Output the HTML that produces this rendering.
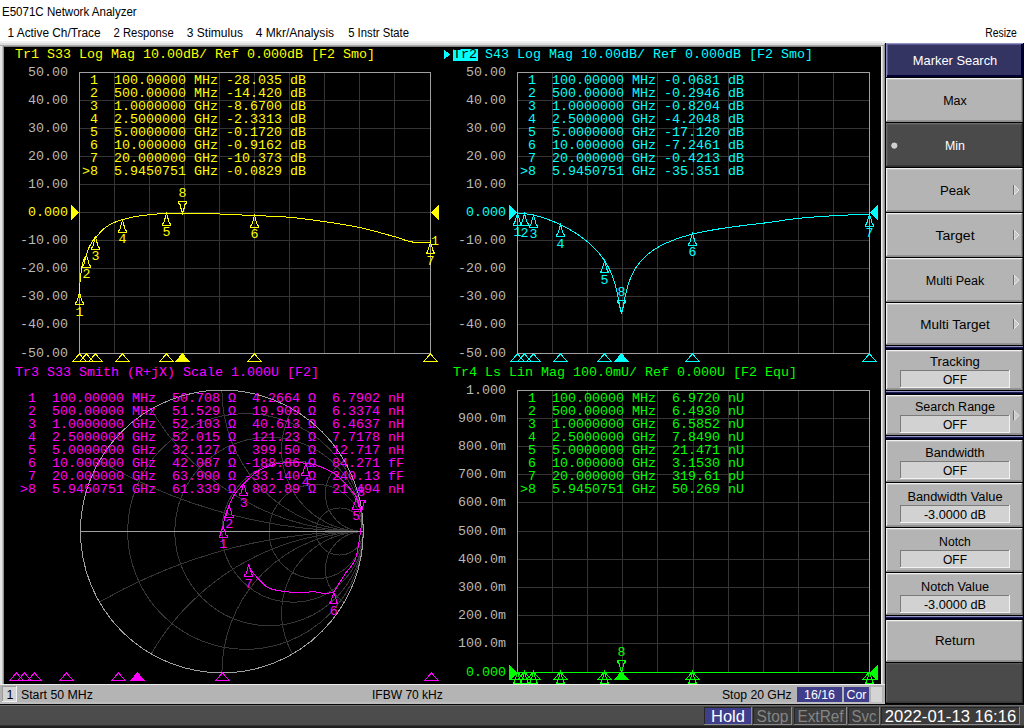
<!DOCTYPE html>
<html><head><meta charset="utf-8"><style>
html,body{margin:0;padding:0;background:#fff;overflow:hidden;}
svg{display:block;}
</style></head><body>
<svg width="1024" height="728" viewBox="0 0 1024 728" shape-rendering="auto">
<rect x="0" y="0" width="1024" height="728" fill="#ffffff" />
<text x="2" y="16" fill="#000" font-size="12" font-family='"Liberation Sans", sans-serif' textLength="134.7" lengthAdjust="spacingAndGlyphs">E5071C Network Analyzer</text>
<text x="7.5" y="37" fill="#000" font-size="12" font-family='"Liberation Sans", sans-serif' textLength="93.1" lengthAdjust="spacingAndGlyphs">1 Active Ch/Trace</text>
<text x="113.6" y="37" fill="#000" font-size="12" font-family='"Liberation Sans", sans-serif' textLength="60.1" lengthAdjust="spacingAndGlyphs">2 Response</text>
<text x="186.8" y="37" fill="#000" font-size="12" font-family='"Liberation Sans", sans-serif' textLength="56.1" lengthAdjust="spacingAndGlyphs">3 Stimulus</text>
<text x="255.8" y="37" fill="#000" font-size="12" font-family='"Liberation Sans", sans-serif' textLength="78.3" lengthAdjust="spacingAndGlyphs">4 Mkr/Analysis</text>
<text x="348.2" y="37" fill="#000" font-size="12" font-family='"Liberation Sans", sans-serif' textLength="60.8" lengthAdjust="spacingAndGlyphs">5 Instr State</text>
<text x="985.2" y="37" fill="#000" font-size="12" font-family='"Liberation Sans", sans-serif' textLength="31.7" lengthAdjust="spacingAndGlyphs">Resize</text>
<rect x="0" y="41" width="886" height="2" fill="#f0f0f0" />
<rect x="0" y="43" width="886" height="2" fill="#dcdcdc" />
<rect x="0" y="45" width="886" height="1" fill="#a8a8a8" />
<rect x="0" y="46" width="886" height="1" fill="#858585" />
<rect x="0" y="46" width="2" height="640" fill="#e4e4e4" />
<rect x="2" y="46" width="1" height="640" fill="#c0c0c0" />
<rect x="3" y="47" width="1" height="638" fill="#909090" />
<rect x="881" y="46" width="1" height="640" fill="#f0f0f0" />
<rect x="882" y="46" width="1" height="640" fill="#d0d0d0" />
<rect x="883" y="46" width="1" height="640" fill="#b0b0b0" />
<rect x="884" y="44" width="1" height="642" fill="#909090" />
<rect x="885" y="43" width="1" height="662" fill="#101010" />
<rect x="4" y="47" width="877" height="637" fill="#000000" />
<defs><clipPath id="cl"><rect x="4" y="47" width="877" height="637"/></clipPath></defs>
<g clip-path="url(#cl)" shape-rendering="crispEdges">
<line x1="114.5" y1="72.5" x2="114.5" y2="353.5" stroke="#343434" stroke-width="1"/>
<line x1="149.5" y1="72.5" x2="149.5" y2="353.5" stroke="#343434" stroke-width="1"/>
<line x1="184.5" y1="72.5" x2="184.5" y2="353.5" stroke="#343434" stroke-width="1"/>
<line x1="219.5" y1="72.5" x2="219.5" y2="353.5" stroke="#343434" stroke-width="1"/>
<line x1="254.5" y1="72.5" x2="254.5" y2="353.5" stroke="#343434" stroke-width="1"/>
<line x1="289.5" y1="72.5" x2="289.5" y2="353.5" stroke="#343434" stroke-width="1"/>
<line x1="324.5" y1="72.5" x2="324.5" y2="353.5" stroke="#343434" stroke-width="1"/>
<line x1="359.5" y1="72.5" x2="359.5" y2="353.5" stroke="#343434" stroke-width="1"/>
<line x1="394.5" y1="72.5" x2="394.5" y2="353.5" stroke="#343434" stroke-width="1"/>
<line x1="79.5" y1="100.5" x2="430.5" y2="100.5" stroke="#343434" stroke-width="1"/>
<line x1="79.5" y1="128.5" x2="430.5" y2="128.5" stroke="#343434" stroke-width="1"/>
<line x1="79.5" y1="156.5" x2="430.5" y2="156.5" stroke="#343434" stroke-width="1"/>
<line x1="79.5" y1="184.5" x2="430.5" y2="184.5" stroke="#343434" stroke-width="1"/>
<line x1="79.5" y1="212.5" x2="430.5" y2="212.5" stroke="#343434" stroke-width="1"/>
<line x1="79.5" y1="240.5" x2="430.5" y2="240.5" stroke="#343434" stroke-width="1"/>
<line x1="79.5" y1="268.5" x2="430.5" y2="268.5" stroke="#343434" stroke-width="1"/>
<line x1="79.5" y1="296.5" x2="430.5" y2="296.5" stroke="#343434" stroke-width="1"/>
<line x1="79.5" y1="324.5" x2="430.5" y2="324.5" stroke="#343434" stroke-width="1"/>
<rect x="79.5" y="72.5" width="351" height="281" fill="none" stroke="#a0a0a0" stroke-width="1"/>
<text x="15" y="58" fill="#ffff00" font-size="13.33" font-family='"Liberation Mono", monospace' text-anchor="start"  xml:space="preserve">Tr1 S33 Log Mag 10.00dB/ Ref 0.000dB [F2 Smo]</text>
<text x="68" y="76.0" fill="#b8b8b8" font-size="13.33" font-family='"Liberation Mono", monospace' text-anchor="end"  xml:space="preserve">50.00</text>
<text x="68" y="104.0" fill="#b8b8b8" font-size="13.33" font-family='"Liberation Mono", monospace' text-anchor="end"  xml:space="preserve">40.00</text>
<text x="68" y="132.0" fill="#b8b8b8" font-size="13.33" font-family='"Liberation Mono", monospace' text-anchor="end"  xml:space="preserve">30.00</text>
<text x="68" y="160.0" fill="#b8b8b8" font-size="13.33" font-family='"Liberation Mono", monospace' text-anchor="end"  xml:space="preserve">20.00</text>
<text x="68" y="188.0" fill="#b8b8b8" font-size="13.33" font-family='"Liberation Mono", monospace' text-anchor="end"  xml:space="preserve">10.00</text>
<text x="68" y="216.0" fill="#ffff00" font-size="13.33" font-family='"Liberation Mono", monospace' text-anchor="end"  xml:space="preserve">0.000</text>
<text x="68" y="244.0" fill="#b8b8b8" font-size="13.33" font-family='"Liberation Mono", monospace' text-anchor="end"  xml:space="preserve">-10.00</text>
<text x="68" y="272.0" fill="#b8b8b8" font-size="13.33" font-family='"Liberation Mono", monospace' text-anchor="end"  xml:space="preserve">-20.00</text>
<text x="68" y="300.0" fill="#b8b8b8" font-size="13.33" font-family='"Liberation Mono", monospace' text-anchor="end"  xml:space="preserve">-30.00</text>
<text x="68" y="328.0" fill="#b8b8b8" font-size="13.33" font-family='"Liberation Mono", monospace' text-anchor="end"  xml:space="preserve">-40.00</text>
<text x="68" y="357.0" fill="#b8b8b8" font-size="13.33" font-family='"Liberation Mono", monospace' text-anchor="end"  xml:space="preserve">-50.00</text>
<text x="82" y="84" fill="#ffff00" font-size="13.33" font-family='"Liberation Mono", monospace' text-anchor="start"  xml:space="preserve"> 1  100.00000 MHz -28.035 dB</text>
<text x="82" y="97" fill="#ffff00" font-size="13.33" font-family='"Liberation Mono", monospace' text-anchor="start"  xml:space="preserve"> 2  500.00000 MHz -14.420 dB</text>
<text x="82" y="110" fill="#ffff00" font-size="13.33" font-family='"Liberation Mono", monospace' text-anchor="start"  xml:space="preserve"> 3  1.0000000 GHz -8.6700 dB</text>
<text x="82" y="123" fill="#ffff00" font-size="13.33" font-family='"Liberation Mono", monospace' text-anchor="start"  xml:space="preserve"> 4  2.5000000 GHz -2.3313 dB</text>
<text x="82" y="136" fill="#ffff00" font-size="13.33" font-family='"Liberation Mono", monospace' text-anchor="start"  xml:space="preserve"> 5  5.0000000 GHz -0.1720 dB</text>
<text x="82" y="149" fill="#ffff00" font-size="13.33" font-family='"Liberation Mono", monospace' text-anchor="start"  xml:space="preserve"> 6  10.000000 GHz -0.9162 dB</text>
<text x="82" y="162" fill="#ffff00" font-size="13.33" font-family='"Liberation Mono", monospace' text-anchor="start"  xml:space="preserve"> 7  20.000000 GHz -10.373 dB</text>
<text x="82" y="175" fill="#ffff00" font-size="13.33" font-family='"Liberation Mono", monospace' text-anchor="start"  xml:space="preserve">&gt;8  5.9450751 GHz -0.0829 dB</text>
<path d="M79.50 293.00 L79.50 292.82 L79.51 292.62 L79.51 292.40 L79.51 292.12 L79.52 291.77 L79.54 291.31 L79.56 290.73 L79.60 290.00 L79.65 289.08 L79.70 287.99 L79.76 286.76 L79.83 285.44 L79.91 284.06 L80.00 282.66 L80.09 281.30 L80.20 280.00 L80.32 278.74 L80.44 277.46 L80.58 276.18 L80.73 274.91 L80.88 273.64 L81.04 272.39 L81.22 271.18 L81.40 270.00 L81.59 268.85 L81.78 267.73 L81.97 266.62 L82.17 265.54 L82.40 264.49 L82.64 263.46 L82.90 262.47 L83.20 261.50 L83.54 260.58 L83.92 259.71 L84.32 258.88 L84.75 258.08 L85.18 257.28 L85.61 256.48 L86.02 255.65 L86.40 254.80 L86.75 253.91 L87.07 252.99 L87.38 252.05 L87.68 251.11 L87.99 250.17 L88.30 249.25 L88.64 248.35 L89.00 247.50 L89.40 246.68 L89.83 245.89 L90.27 245.11 L90.73 244.36 L91.19 243.62 L91.65 242.90 L92.09 242.19 L92.50 241.50 L92.91 240.79 L93.32 240.04 L93.72 239.29 L94.12 238.57 L94.49 237.90 L94.84 237.31 L95.14 236.84 L95.40 236.50 L95.61 236.33 L95.77 236.32 L95.89 236.43 L95.99 236.62 L96.06 236.84 L96.12 237.07 L96.17 237.26 L96.21 237.36 L96.61 236.84 L97.05 236.27 L97.49 235.70 L97.93 235.15 L98.37 234.61 L98.80 234.08 L99.24 233.55 L99.68 233.04 L100.12 232.55 L100.56 232.06 L101.00 231.59 L101.44 231.13 L101.88 230.68 L102.31 230.24 L102.75 229.82 L103.19 229.42 L103.63 229.02 L104.07 228.65 L104.51 228.29 L104.95 227.94 L105.39 227.61 L105.83 227.29 L106.26 226.97 L106.70 226.67 L107.14 226.37 L107.58 226.08 L108.02 225.79 L108.46 225.52 L108.90 225.25 L109.33 224.99 L109.77 224.73 L110.21 224.49 L110.65 224.25 L111.09 224.01 L111.53 223.78 L111.97 223.56 L112.41 223.35 L112.84 223.14 L113.28 222.93 L113.72 222.73 L114.16 222.54 L114.60 222.35 L115.04 222.16 L115.48 221.98 L115.92 221.80 L116.35 221.63 L116.79 221.46 L117.23 221.29 L117.67 221.13 L118.11 220.97 L118.55 220.81 L118.99 220.66 L119.43 220.51 L119.87 220.37 L120.30 220.23 L120.74 220.09 L121.18 219.96 L121.62 219.83 L122.06 219.70 L122.50 219.58 L122.94 219.46 L123.38 219.34 L123.81 219.22 L124.25 219.11 L124.69 218.99 L125.13 218.87 L125.57 218.76 L126.01 218.65 L126.45 218.53 L126.89 218.42 L127.32 218.31 L127.76 218.21 L128.20 218.10 L128.64 217.99 L129.08 217.89 L129.52 217.78 L129.96 217.68 L130.39 217.58 L130.83 217.48 L131.27 217.39 L131.71 217.29 L132.15 217.20 L132.59 217.11 L133.03 217.02 L133.47 216.93 L133.91 216.84 L134.34 216.75 L134.78 216.67 L135.22 216.59 L135.66 216.51 L136.10 216.43 L136.54 216.36 L136.98 216.28 L137.41 216.21 L137.85 216.14 L138.29 216.08 L138.73 216.01 L139.17 215.95 L139.61 215.89 L140.05 215.83 L140.49 215.77 L140.93 215.72 L141.36 215.66 L141.80 215.61 L142.24 215.55 L142.68 215.50 L143.12 215.44 L143.56 215.39 L144.00 215.33 L144.44 215.28 L144.87 215.23 L145.31 215.18 L145.75 215.12 L146.19 215.07 L146.63 215.02 L147.07 214.97 L147.51 214.92 L147.94 214.87 L148.38 214.82 L148.82 214.77 L149.26 214.72 L149.70 214.68 L150.14 214.63 L150.58 214.58 L151.02 214.54 L151.45 214.49 L151.89 214.45 L152.33 214.41 L152.77 214.36 L153.21 214.32 L153.65 214.28 L154.09 214.24 L154.53 214.20 L154.97 214.16 L155.40 214.12 L155.84 214.09 L156.28 214.05 L156.72 214.01 L157.16 213.98 L157.60 213.95 L158.04 213.91 L158.47 213.88 L158.91 213.85 L159.35 213.82 L159.79 213.79 L160.23 213.76 L160.67 213.74 L161.11 213.71 L161.55 213.69 L161.99 213.66 L162.42 213.64 L162.86 213.62 L163.30 213.60 L163.74 213.58 L164.18 213.56 L164.62 213.54 L165.06 213.53 L165.50 213.51 L165.93 213.50 L166.37 213.49 L166.81 213.48 L167.25 213.47 L167.69 213.46 L168.13 213.45 L168.57 213.44 L169.00 213.43 L169.44 213.42 L169.88 213.41 L170.32 213.40 L170.76 213.39 L171.20 213.38 L171.64 213.37 L172.08 213.36 L172.51 213.35 L172.95 213.34 L173.39 213.33 L173.83 213.33 L174.27 213.32 L174.71 213.31 L175.15 213.30 L175.59 213.30 L176.02 213.29 L176.46 213.28 L176.90 213.28 L177.34 213.27 L177.78 213.27 L178.22 213.26 L178.66 213.26 L179.10 213.25 L179.53 213.25 L179.97 213.25 L180.41 213.24 L180.85 213.24 L181.29 213.24 L181.73 213.24 L182.17 213.23 L182.61 213.23 L183.04 213.23 L183.48 213.23 L183.92 213.23 L184.36 213.23 L184.80 213.24 L185.24 213.24 L185.68 213.24 L186.12 213.24 L186.56 213.24 L186.99 213.25 L187.43 213.25 L187.87 213.25 L188.31 213.26 L188.75 213.26 L189.19 213.27 L189.63 213.27 L190.06 213.28 L190.50 213.28 L190.94 213.29 L191.38 213.29 L191.82 213.30 L192.26 213.31 L192.70 213.31 L193.14 213.32 L193.57 213.33 L194.01 213.33 L194.45 213.34 L194.89 213.35 L195.33 213.36 L195.77 213.36 L196.21 213.37 L196.65 213.38 L197.08 213.39 L197.52 213.40 L197.96 213.41 L198.40 213.42 L198.84 213.43 L199.28 213.44 L199.72 213.45 L200.16 213.46 L200.59 213.47 L201.03 213.48 L201.47 213.49 L201.91 213.50 L202.35 213.51 L202.79 213.52 L203.23 213.53 L203.67 213.54 L204.10 213.55 L204.54 213.56 L204.98 213.57 L205.42 213.58 L205.86 213.59 L206.30 213.60 L206.74 213.61 L207.18 213.62 L207.62 213.63 L208.05 213.64 L208.49 213.65 L208.93 213.66 L209.37 213.67 L209.81 213.68 L210.25 213.69 L210.69 213.71 L211.12 213.72 L211.56 213.73 L212.00 213.74 L212.44 213.75 L212.88 213.76 L213.32 213.77 L213.76 213.79 L214.20 213.80 L214.63 213.81 L215.07 213.83 L215.51 213.84 L215.95 213.85 L216.39 213.87 L216.83 213.88 L217.27 213.90 L217.71 213.91 L218.14 213.93 L218.58 213.94 L219.02 213.96 L219.46 213.98 L219.90 213.99 L220.34 214.01 L220.78 214.02 L221.22 214.04 L221.66 214.06 L222.09 214.08 L222.53 214.09 L222.97 214.11 L223.41 214.13 L223.85 214.15 L224.29 214.17 L224.73 214.18 L225.16 214.20 L225.60 214.22 L226.04 214.24 L226.48 214.26 L226.92 214.28 L227.36 214.30 L227.80 214.32 L228.24 214.34 L228.67 214.36 L229.11 214.38 L229.55 214.40 L229.99 214.42 L230.43 214.44 L230.87 214.46 L231.31 214.48 L231.75 214.50 L232.18 214.52 L232.62 214.54 L233.06 214.56 L233.50 214.58 L233.94 214.61 L234.38 214.63 L234.82 214.65 L235.26 214.67 L235.69 214.69 L236.13 214.71 L236.57 214.73 L237.01 214.75 L237.45 214.78 L237.89 214.80 L238.33 214.82 L238.77 214.84 L239.20 214.86 L239.64 214.88 L240.08 214.90 L240.52 214.93 L240.96 214.95 L241.40 214.97 L241.84 214.99 L242.28 215.01 L242.72 215.03 L243.15 215.05 L243.59 215.07 L244.03 215.10 L244.47 215.12 L244.91 215.14 L245.35 215.16 L245.79 215.18 L246.22 215.20 L246.66 215.22 L247.10 215.24 L247.54 215.26 L247.98 215.28 L248.42 215.30 L248.86 215.32 L249.30 215.34 L249.73 215.36 L250.17 215.38 L250.61 215.40 L251.05 215.42 L251.49 215.44 L251.93 215.46 L252.37 215.48 L252.81 215.50 L253.25 215.52 L253.68 215.54 L254.12 215.56 L254.56 215.57 L255.00 215.59 L255.44 215.61 L255.88 215.63 L256.32 215.65 L256.75 215.66 L257.19 215.68 L257.63 215.70 L258.07 215.71 L258.51 215.73 L258.95 215.75 L259.39 215.76 L259.83 215.78 L260.26 215.79 L260.70 215.81 L261.14 215.83 L261.58 215.84 L262.02 215.86 L262.46 215.87 L262.90 215.89 L263.34 215.90 L263.77 215.92 L264.21 215.93 L264.65 215.95 L265.09 215.96 L265.53 215.98 L265.97 216.00 L266.41 216.01 L266.85 216.03 L267.29 216.04 L267.72 216.06 L268.16 216.07 L268.60 216.09 L269.04 216.11 L269.48 216.12 L269.92 216.14 L270.36 216.16 L270.80 216.17 L271.23 216.19 L271.67 216.21 L272.11 216.23 L272.55 216.24 L272.99 216.26 L273.43 216.28 L273.87 216.30 L274.30 216.32 L274.74 216.34 L275.18 216.36 L275.62 216.38 L276.06 216.40 L276.50 216.42 L276.94 216.44 L277.38 216.46 L277.81 216.48 L278.25 216.51 L278.69 216.53 L279.13 216.55 L279.57 216.58 L280.01 216.60 L280.45 216.62 L280.89 216.65 L281.32 216.67 L281.76 216.70 L282.20 216.73 L282.64 216.76 L283.08 216.79 L283.52 216.82 L283.96 216.85 L284.40 216.88 L284.83 216.91 L285.27 216.94 L285.71 216.97 L286.15 217.01 L286.59 217.04 L287.03 217.08 L287.47 217.11 L287.91 217.15 L288.35 217.19 L288.78 217.23 L289.22 217.27 L289.66 217.30 L290.10 217.34 L290.54 217.38 L290.98 217.43 L291.42 217.47 L291.86 217.51 L292.29 217.55 L292.73 217.60 L293.17 217.64 L293.61 217.68 L294.05 217.73 L294.49 217.78 L294.93 217.82 L295.37 217.87 L295.80 217.92 L296.24 217.96 L296.68 218.01 L297.12 218.06 L297.56 218.11 L298.00 218.16 L298.44 218.21 L298.88 218.26 L299.31 218.31 L299.75 218.36 L300.19 218.41 L300.63 218.46 L301.07 218.52 L301.51 218.57 L301.95 218.62 L302.38 218.68 L302.82 218.73 L303.26 218.79 L303.70 218.84 L304.14 218.89 L304.58 218.95 L305.02 219.01 L305.46 219.06 L305.89 219.12 L306.33 219.17 L306.77 219.23 L307.21 219.29 L307.65 219.35 L308.09 219.40 L308.53 219.46 L308.97 219.52 L309.40 219.58 L309.84 219.64 L310.28 219.69 L310.72 219.75 L311.16 219.81 L311.60 219.87 L312.04 219.93 L312.48 219.99 L312.91 220.05 L313.35 220.11 L313.79 220.17 L314.23 220.23 L314.67 220.29 L315.11 220.35 L315.55 220.41 L315.99 220.47 L316.42 220.53 L316.86 220.59 L317.30 220.65 L317.74 220.71 L318.18 220.78 L318.62 220.84 L319.06 220.90 L319.50 220.96 L319.93 221.02 L320.37 221.08 L320.81 221.14 L321.25 221.20 L321.69 221.26 L322.13 221.32 L322.57 221.38 L323.01 221.44 L323.44 221.51 L323.88 221.57 L324.32 221.63 L324.76 221.69 L325.20 221.75 L325.64 221.81 L326.08 221.87 L326.52 221.93 L326.95 221.99 L327.39 222.05 L327.83 222.11 L328.27 222.18 L328.71 222.24 L329.15 222.30 L329.59 222.36 L330.03 222.43 L330.46 222.49 L330.90 222.56 L331.34 222.62 L331.78 222.68 L332.22 222.75 L332.66 222.81 L333.10 222.88 L333.54 222.95 L333.98 223.01 L334.41 223.08 L334.85 223.14 L335.29 223.21 L335.73 223.28 L336.17 223.35 L336.61 223.41 L337.05 223.48 L337.48 223.55 L337.92 223.62 L338.36 223.69 L338.80 223.76 L339.24 223.83 L339.68 223.90 L340.12 223.97 L340.56 224.04 L341.00 224.11 L341.43 224.18 L341.87 224.26 L342.31 224.33 L342.75 224.40 L343.19 224.47 L343.63 224.55 L344.07 224.62 L344.50 224.70 L344.94 224.77 L345.38 224.85 L345.82 224.92 L346.26 225.00 L346.70 225.07 L347.14 225.15 L347.58 225.23 L348.01 225.30 L348.45 225.38 L348.89 225.46 L349.33 225.54 L349.77 225.62 L350.21 225.70 L350.65 225.78 L351.09 225.86 L351.52 225.94 L351.96 226.02 L352.40 226.10 L352.84 226.18 L353.28 226.27 L353.72 226.35 L354.16 226.43 L354.60 226.52 L355.03 226.60 L355.47 226.69 L355.91 226.77 L356.35 226.86 L356.79 226.94 L357.23 227.03 L357.67 227.12 L358.11 227.20 L358.54 227.29 L358.98 227.38 L359.42 227.47 L359.86 227.56 L360.30 227.65 L360.74 227.74 L361.18 227.83 L361.62 227.92 L362.05 228.02 L362.49 228.12 L362.93 228.21 L363.37 228.31 L363.81 228.41 L364.25 228.51 L364.69 228.61 L365.13 228.71 L365.56 228.82 L366.00 228.92 L366.44 229.02 L366.88 229.13 L367.32 229.24 L367.76 229.34 L368.20 229.45 L368.64 229.56 L369.07 229.67 L369.51 229.78 L369.95 229.89 L370.39 230.01 L370.83 230.12 L371.27 230.23 L371.71 230.35 L372.15 230.46 L372.58 230.58 L373.02 230.70 L373.46 230.81 L373.90 230.93 L374.34 231.05 L374.78 231.17 L375.22 231.29 L375.66 231.40 L376.09 231.52 L376.53 231.65 L376.97 231.77 L377.41 231.89 L377.85 232.01 L378.29 232.13 L378.73 232.25 L379.17 232.37 L379.61 232.50 L380.04 232.62 L380.48 232.74 L380.92 232.87 L381.36 232.99 L381.80 233.11 L382.24 233.24 L382.68 233.36 L383.12 233.49 L383.55 233.61 L383.99 233.73 L384.43 233.86 L384.87 233.98 L385.31 234.11 L385.75 234.23 L386.19 234.36 L386.62 234.48 L387.06 234.60 L387.50 234.73 L387.94 234.85 L388.38 234.97 L388.82 235.10 L389.26 235.22 L389.70 235.34 L390.13 235.47 L390.57 235.59 L391.01 235.71 L391.45 235.83 L391.89 235.95 L392.33 236.07 L392.77 236.19 L393.21 236.32 L393.64 236.43 L394.08 236.55 L394.52 236.67 L394.96 236.79 L395.40 236.91 L395.84 237.03 L396.28 237.16 L396.72 237.29 L397.15 237.42 L397.59 237.56 L398.03 237.71 L398.47 237.85 L398.91 238.00 L399.35 238.15 L399.79 238.31 L400.23 238.46 L400.67 238.62 L401.10 238.78 L401.54 238.93 L401.98 239.09 L402.42 239.25 L402.86 239.41 L403.30 239.57 L403.74 239.72 L404.18 239.88 L404.61 240.03 L405.05 240.18 L405.49 240.33 L405.93 240.47 L406.37 240.61 L406.81 240.75 L407.25 240.88 L407.69 241.01 L408.12 241.13 L408.56 241.25 L409.00 241.36 L409.44 241.47 L409.88 241.57 L410.32 241.66 L410.76 241.75 L411.19 241.83 L411.63 241.90 L412.07 241.96 L412.51 242.01 L412.95 242.06 L413.39 242.09 L413.83 242.12 L414.27 242.13 L414.70 242.14 L415.14 242.14 L415.58 242.14 L416.02 242.14 L416.46 242.14 L416.90 242.14 L417.34 242.14 L417.78 242.14 L418.21 242.14 L418.65 242.14 L419.09 242.14 L419.53 242.14 L419.97 242.14 L420.41 242.14 L420.85 242.14 L421.29 242.15 L421.72 242.15 L422.16 242.15 L422.60 242.15 L423.04 242.15 L423.48 242.15 L423.92 242.15 L424.36 242.15 L424.80 242.15 L425.24 242.15 L425.67 242.15 L426.11 242.15 L426.55 242.15 L426.99 242.15 L427.43 242.15 L427.87 242.15 L428.31 242.15 L428.75 242.15 L429.18 242.15 L429.62 242.15 L430.06 242.15 L430.50 242.15" fill="none" stroke="#ffff00" stroke-width="1.0" stroke-linejoin="round" shape-rendering="crispEdges"/>
<path d="M79.5 292.8 L76.5 302.8 L75.5 302.8 L75.5 304.6 L83.5 304.6 L83.5 302.8 L82.5 302.8 Z" fill="none" stroke="#ffff00" stroke-width="1" stroke-linejoin="miter" shape-rendering="crispEdges"/>
<text x="79.5" y="315.6" fill="#ffff00" font-size="13.33" font-family='"Liberation Mono", monospace' text-anchor="middle"  xml:space="preserve">1</text>
<path d="M86.5 255.3 L83.5 265.3 L82.5 265.3 L82.5 267.1 L90.5 267.1 L90.5 265.3 L89.5 265.3 Z" fill="none" stroke="#ffff00" stroke-width="1" stroke-linejoin="miter" shape-rendering="crispEdges"/>
<text x="86.5" y="278.1" fill="#ffff00" font-size="13.33" font-family='"Liberation Mono", monospace' text-anchor="middle"  xml:space="preserve">2</text>
<path d="M95.5 237.4 L92.5 247.4 L91.5 247.4 L91.5 249.2 L99.5 249.2 L99.5 247.4 L98.5 247.4 Z" fill="none" stroke="#ffff00" stroke-width="1" stroke-linejoin="miter" shape-rendering="crispEdges"/>
<text x="95.5" y="260.1627" fill="#ffff00" font-size="13.33" font-family='"Liberation Mono", monospace' text-anchor="middle"  xml:space="preserve">3</text>
<path d="M122.5 220.4 L119.5 230.4 L118.5 230.4 L118.5 232.2 L126.5 232.2 L126.5 230.4 L125.5 230.4 Z" fill="none" stroke="#ffff00" stroke-width="1" stroke-linejoin="miter" shape-rendering="crispEdges"/>
<text x="122.5" y="243.20000000000002" fill="#ffff00" font-size="13.33" font-family='"Liberation Mono", monospace' text-anchor="middle"  xml:space="preserve">4</text>
<path d="M166.5 213.5 L163.5 223.5 L162.5 223.5 L162.5 225.3 L170.5 225.3 L170.5 223.5 L169.5 223.5 Z" fill="none" stroke="#ffff00" stroke-width="1" stroke-linejoin="miter" shape-rendering="crispEdges"/>
<text x="166.5" y="236.28332" fill="#ffff00" font-size="13.33" font-family='"Liberation Mono", monospace' text-anchor="middle"  xml:space="preserve">5</text>
<path d="M254.5 215.6 L251.5 225.6 L250.5 225.6 L250.5 227.4 L258.5 227.4 L258.5 225.6 L257.5 225.6 Z" fill="none" stroke="#ffff00" stroke-width="1" stroke-linejoin="miter" shape-rendering="crispEdges"/>
<text x="254.5" y="238.374522" fill="#ffff00" font-size="13.33" font-family='"Liberation Mono", monospace' text-anchor="middle"  xml:space="preserve">6</text>
<path d="M430.5 242.1 L427.5 252.1 L426.5 252.1 L426.5 253.9 L434.5 253.9 L434.5 252.1 L433.5 252.1 Z" fill="none" stroke="#ffff00" stroke-width="1" stroke-linejoin="miter" shape-rendering="crispEdges"/>
<text x="430.5" y="264.94813" fill="#ffff00" font-size="13.33" font-family='"Liberation Mono", monospace' text-anchor="middle"  xml:space="preserve">7</text>
<path d="M182.5 213.2 L179.5 203.2 L178.5 203.2 L178.5 201.4 L186.5 201.4 L186.5 203.2 L185.5 203.2 Z" fill="none" stroke="#ffff00" stroke-width="1.2" shape-rendering="crispEdges"/>
<text x="182.5" y="197.232949" fill="#ffff00" font-size="13.33" font-family='"Liberation Mono", monospace' text-anchor="middle"  xml:space="preserve">8</text>
<path d="M79.5 354.0 L72.5 361.5 L86.5 361.5 Z" fill="none" stroke="#ffff00" stroke-width="1" shape-rendering="crispEdges"/>
<path d="M86.5 354.0 L79.5 361.5 L93.5 361.5 Z" fill="none" stroke="#ffff00" stroke-width="1" shape-rendering="crispEdges"/>
<path d="M95.5 354.0 L88.5 361.5 L102.5 361.5 Z" fill="none" stroke="#ffff00" stroke-width="1" shape-rendering="crispEdges"/>
<path d="M122.5 354.0 L115.5 361.5 L129.5 361.5 Z" fill="none" stroke="#ffff00" stroke-width="1" shape-rendering="crispEdges"/>
<path d="M166.5 354.0 L159.5 361.5 L173.5 361.5 Z" fill="none" stroke="#ffff00" stroke-width="1" shape-rendering="crispEdges"/>
<path d="M254.5 354.0 L247.5 361.5 L261.5 361.5 Z" fill="none" stroke="#ffff00" stroke-width="1" shape-rendering="crispEdges"/>
<path d="M430.5 354.0 L423.5 361.5 L437.5 361.5 Z" fill="none" stroke="#ffff00" stroke-width="1" shape-rendering="crispEdges"/>
<path d="M182.5 354.0 L175.5 361.5 L189.5 361.5 Z" fill="#ffff00" stroke="#ffff00" stroke-width="1" shape-rendering="crispEdges"/>
<path d="M79 212.5 L71 205.0 L71 220.0 Z" fill="#ffff00"/>
<path d="M431 212.5 L439 205.0 L439 220.0 Z" fill="#ffff00"/>
<text x="431" y="245" fill="#ffff00" font-size="13.33" font-family='"Liberation Mono", monospace' text-anchor="start"  xml:space="preserve">1</text>
<line x1="552.5" y1="72.5" x2="552.5" y2="353.5" stroke="#343434" stroke-width="1"/>
<line x1="587.5" y1="72.5" x2="587.5" y2="353.5" stroke="#343434" stroke-width="1"/>
<line x1="622.5" y1="72.5" x2="622.5" y2="353.5" stroke="#343434" stroke-width="1"/>
<line x1="657.5" y1="72.5" x2="657.5" y2="353.5" stroke="#343434" stroke-width="1"/>
<line x1="693.5" y1="72.5" x2="693.5" y2="353.5" stroke="#343434" stroke-width="1"/>
<line x1="728.5" y1="72.5" x2="728.5" y2="353.5" stroke="#343434" stroke-width="1"/>
<line x1="763.5" y1="72.5" x2="763.5" y2="353.5" stroke="#343434" stroke-width="1"/>
<line x1="798.5" y1="72.5" x2="798.5" y2="353.5" stroke="#343434" stroke-width="1"/>
<line x1="833.5" y1="72.5" x2="833.5" y2="353.5" stroke="#343434" stroke-width="1"/>
<line x1="517.5" y1="100.5" x2="869.5" y2="100.5" stroke="#343434" stroke-width="1"/>
<line x1="517.5" y1="128.5" x2="869.5" y2="128.5" stroke="#343434" stroke-width="1"/>
<line x1="517.5" y1="156.5" x2="869.5" y2="156.5" stroke="#343434" stroke-width="1"/>
<line x1="517.5" y1="184.5" x2="869.5" y2="184.5" stroke="#343434" stroke-width="1"/>
<line x1="517.5" y1="212.5" x2="869.5" y2="212.5" stroke="#343434" stroke-width="1"/>
<line x1="517.5" y1="240.5" x2="869.5" y2="240.5" stroke="#343434" stroke-width="1"/>
<line x1="517.5" y1="268.5" x2="869.5" y2="268.5" stroke="#343434" stroke-width="1"/>
<line x1="517.5" y1="296.5" x2="869.5" y2="296.5" stroke="#343434" stroke-width="1"/>
<line x1="517.5" y1="324.5" x2="869.5" y2="324.5" stroke="#343434" stroke-width="1"/>
<rect x="517.5" y="72.5" width="352" height="281" fill="none" stroke="#a0a0a0" stroke-width="1"/>
<path d="M444 49.5 L450 54.5 L444 59.5 Z" fill="#00ffff"/>
<rect x="453" y="49" width="25" height="12" fill="#00ffff" />
<text x="453" y="58" fill="#000" font-size="13.33" font-family='"Liberation Mono", monospace' text-anchor="start"  xml:space="preserve">Tr2</text>
<text x="485" y="58" fill="#00ffff" font-size="13.33" font-family='"Liberation Mono", monospace' text-anchor="start"  xml:space="preserve">S43 Log Mag 10.00dB/ Ref 0.000dB [F2 Smo]</text>
<text x="506" y="76.0" fill="#b8b8b8" font-size="13.33" font-family='"Liberation Mono", monospace' text-anchor="end"  xml:space="preserve">50.00</text>
<text x="506" y="104.0" fill="#b8b8b8" font-size="13.33" font-family='"Liberation Mono", monospace' text-anchor="end"  xml:space="preserve">40.00</text>
<text x="506" y="132.0" fill="#b8b8b8" font-size="13.33" font-family='"Liberation Mono", monospace' text-anchor="end"  xml:space="preserve">30.00</text>
<text x="506" y="160.0" fill="#b8b8b8" font-size="13.33" font-family='"Liberation Mono", monospace' text-anchor="end"  xml:space="preserve">20.00</text>
<text x="506" y="188.0" fill="#b8b8b8" font-size="13.33" font-family='"Liberation Mono", monospace' text-anchor="end"  xml:space="preserve">10.00</text>
<text x="506" y="216.0" fill="#00ffff" font-size="13.33" font-family='"Liberation Mono", monospace' text-anchor="end"  xml:space="preserve">0.000</text>
<text x="506" y="244.0" fill="#b8b8b8" font-size="13.33" font-family='"Liberation Mono", monospace' text-anchor="end"  xml:space="preserve">-10.00</text>
<text x="506" y="272.0" fill="#b8b8b8" font-size="13.33" font-family='"Liberation Mono", monospace' text-anchor="end"  xml:space="preserve">-20.00</text>
<text x="506" y="300.0" fill="#b8b8b8" font-size="13.33" font-family='"Liberation Mono", monospace' text-anchor="end"  xml:space="preserve">-30.00</text>
<text x="506" y="328.0" fill="#b8b8b8" font-size="13.33" font-family='"Liberation Mono", monospace' text-anchor="end"  xml:space="preserve">-40.00</text>
<text x="506" y="357.0" fill="#b8b8b8" font-size="13.33" font-family='"Liberation Mono", monospace' text-anchor="end"  xml:space="preserve">-50.00</text>
<text x="520" y="84" fill="#00ffff" font-size="13.33" font-family='"Liberation Mono", monospace' text-anchor="start"  xml:space="preserve"> 1  100.00000 MHz -0.0681 dB</text>
<text x="520" y="97" fill="#00ffff" font-size="13.33" font-family='"Liberation Mono", monospace' text-anchor="start"  xml:space="preserve"> 2  500.00000 MHz -0.2946 dB</text>
<text x="520" y="110" fill="#00ffff" font-size="13.33" font-family='"Liberation Mono", monospace' text-anchor="start"  xml:space="preserve"> 3  1.0000000 GHz -0.8204 dB</text>
<text x="520" y="123" fill="#00ffff" font-size="13.33" font-family='"Liberation Mono", monospace' text-anchor="start"  xml:space="preserve"> 4  2.5000000 GHz -4.2048 dB</text>
<text x="520" y="136" fill="#00ffff" font-size="13.33" font-family='"Liberation Mono", monospace' text-anchor="start"  xml:space="preserve"> 5  5.0000000 GHz -17.120 dB</text>
<text x="520" y="149" fill="#00ffff" font-size="13.33" font-family='"Liberation Mono", monospace' text-anchor="start"  xml:space="preserve"> 6  10.000000 GHz -7.2461 dB</text>
<text x="520" y="162" fill="#00ffff" font-size="13.33" font-family='"Liberation Mono", monospace' text-anchor="start"  xml:space="preserve"> 7  20.000000 GHz -0.4213 dB</text>
<text x="520" y="175" fill="#00ffff" font-size="13.33" font-family='"Liberation Mono", monospace' text-anchor="start"  xml:space="preserve">&gt;8  5.9450751 GHz -35.351 dB</text>
<path d="M517.50 213.06 L517.79 213.10 L518.09 213.14 L518.38 213.19 L518.67 213.24 L518.97 213.28 L519.26 213.32 L519.55 213.36 L519.85 213.40 L520.14 213.43 L520.43 213.45 L520.73 213.48 L521.02 213.50 L521.31 213.52 L521.61 213.54 L521.90 213.56 L522.19 213.57 L522.49 213.59 L522.78 213.61 L523.07 213.62 L523.37 213.64 L523.66 213.66 L523.95 213.68 L524.25 213.70 L524.54 213.73 L524.83 213.76 L525.13 213.79 L525.42 213.82 L525.71 213.86 L526.01 213.90 L526.30 213.94 L526.59 213.98 L526.89 214.02 L527.18 214.06 L527.47 214.10 L527.77 214.14 L528.06 214.18 L528.35 214.23 L528.65 214.27 L528.94 214.31 L529.23 214.36 L529.53 214.41 L529.82 214.45 L530.11 214.50 L530.41 214.55 L530.70 214.60 L530.99 214.65 L531.29 214.70 L531.58 214.75 L531.87 214.81 L532.17 214.86 L532.46 214.92 L532.75 214.98 L533.05 215.04 L533.34 215.10 L533.63 215.17 L533.93 215.23 L534.22 215.30 L534.51 215.37 L534.81 215.44 L535.10 215.51 L535.39 215.58 L535.69 215.65 L535.98 215.73 L536.27 215.80 L536.57 215.88 L536.86 215.95 L537.15 216.03 L537.45 216.11 L537.74 216.18 L538.03 216.26 L538.33 216.34 L538.62 216.42 L538.91 216.50 L539.21 216.59 L539.50 216.67 L539.79 216.75 L540.09 216.84 L540.38 216.92 L540.67 217.01 L540.97 217.10 L541.26 217.19 L541.55 217.27 L541.85 217.36 L542.14 217.45 L542.43 217.54 L542.73 217.64 L543.02 217.73 L543.31 217.82 L543.61 217.92 L543.90 218.01 L544.19 218.11 L544.49 218.20 L544.78 218.30 L545.07 218.40 L545.37 218.50 L545.66 218.60 L545.95 218.70 L546.25 218.80 L546.54 218.90 L546.83 219.01 L547.13 219.11 L547.42 219.21 L547.71 219.32 L548.01 219.43 L548.30 219.53 L548.59 219.64 L548.89 219.75 L549.18 219.86 L549.47 219.97 L549.77 220.08 L550.06 220.19 L550.35 220.30 L550.65 220.42 L550.94 220.53 L551.23 220.65 L551.53 220.76 L551.82 220.88 L552.11 220.99 L552.41 221.11 L552.70 221.23 L552.99 221.35 L553.29 221.47 L553.58 221.59 L553.87 221.72 L554.17 221.84 L554.46 221.96 L554.75 222.09 L555.05 222.21 L555.34 222.34 L555.63 222.47 L555.93 222.60 L556.22 222.73 L556.51 222.86 L556.81 222.99 L557.10 223.12 L557.39 223.25 L557.69 223.38 L557.98 223.52 L558.27 223.65 L558.57 223.79 L558.86 223.93 L559.15 224.06 L559.45 224.20 L559.74 224.34 L560.03 224.48 L560.33 224.62 L560.62 224.77 L560.91 224.91 L561.21 225.05 L561.50 225.20 L561.79 225.34 L562.09 225.49 L562.38 225.64 L562.67 225.78 L562.97 225.93 L563.26 226.08 L563.55 226.23 L563.85 226.38 L564.14 226.53 L564.43 226.69 L564.73 226.84 L565.02 226.99 L565.31 227.15 L565.61 227.31 L565.90 227.46 L566.19 227.62 L566.49 227.78 L566.78 227.94 L567.07 228.10 L567.37 228.26 L567.66 228.42 L567.95 228.58 L568.25 228.75 L568.54 228.91 L568.83 229.08 L569.13 229.24 L569.42 229.41 L569.71 229.58 L570.01 229.75 L570.30 229.92 L570.59 230.09 L570.89 230.26 L571.18 230.43 L571.47 230.61 L571.77 230.78 L572.06 230.96 L572.35 231.13 L572.65 231.31 L572.94 231.49 L573.23 231.67 L573.53 231.85 L573.82 232.03 L574.11 232.21 L574.41 232.39 L574.70 232.58 L574.99 232.76 L575.29 232.95 L575.58 233.14 L575.87 233.33 L576.17 233.52 L576.46 233.71 L576.75 233.90 L577.05 234.09 L577.34 234.29 L577.63 234.48 L577.93 234.68 L578.22 234.87 L578.51 235.07 L578.81 235.27 L579.10 235.47 L579.39 235.68 L579.69 235.88 L579.98 236.09 L580.27 236.29 L580.57 236.50 L580.86 236.71 L581.15 236.92 L581.45 237.13 L581.74 237.34 L582.03 237.56 L582.33 237.77 L582.62 237.99 L582.91 238.21 L583.21 238.43 L583.50 238.65 L583.79 238.87 L584.09 239.09 L584.38 239.32 L584.67 239.55 L584.97 239.77 L585.26 240.01 L585.55 240.24 L585.85 240.47 L586.14 240.71 L586.43 240.94 L586.73 241.18 L587.02 241.42 L587.31 241.66 L587.61 241.91 L587.90 242.15 L588.19 242.40 L588.49 242.65 L588.78 242.90 L589.07 243.16 L589.37 243.41 L589.66 243.67 L589.95 243.93 L590.25 244.19 L590.54 244.45 L590.83 244.72 L591.13 244.99 L591.42 245.26 L591.71 245.53 L592.01 245.80 L592.30 246.08 L592.59 246.36 L592.89 246.64 L593.18 246.93 L593.47 247.22 L593.77 247.50 L594.06 247.80 L594.35 248.09 L594.65 248.39 L594.94 248.69 L595.23 249.00 L595.53 249.30 L595.82 249.61 L596.11 249.92 L596.41 250.24 L596.70 250.56 L596.99 250.88 L597.29 251.21 L597.58 251.54 L597.87 251.87 L598.17 252.21 L598.46 252.55 L598.75 252.89 L599.05 253.24 L599.34 253.59 L599.63 253.95 L599.93 254.31 L600.22 254.68 L600.51 255.05 L600.81 255.42 L601.10 255.80 L601.39 256.18 L601.69 256.57 L601.98 256.96 L602.27 257.36 L602.57 257.77 L602.86 258.18 L603.15 258.59 L603.45 259.02 L603.74 259.44 L604.03 259.88 L604.33 260.32 L604.62 260.77 L604.91 261.22 L605.21 261.68 L605.50 262.15 L605.79 262.63 L606.09 263.11 L606.38 263.61 L606.67 264.11 L606.97 264.62 L607.26 265.14 L607.55 265.67 L607.85 266.21 L608.14 266.76 L608.43 267.32 L608.73 267.89 L609.02 268.47 L609.31 269.07 L609.61 269.67 L609.90 270.30 L610.19 270.93 L610.49 271.58 L610.78 272.25 L611.07 272.93 L611.37 273.63 L611.66 274.34 L611.95 275.08 L612.25 275.83 L612.54 276.61 L612.83 277.40 L613.13 278.22 L613.42 279.06 L613.66 279.78 L613.70 279.89 L613.71 279.93 L613.74 280.01 L613.78 280.13 L613.82 280.26 L613.86 280.38 L613.90 280.50 L613.94 280.62 L613.98 280.74 L614.01 280.83 L614.02 280.87 L614.06 280.99 L614.10 281.12 L614.14 281.24 L614.18 281.37 L614.22 281.49 L614.26 281.62 L614.30 281.75 L614.30 281.76 L614.34 281.87 L614.38 282.00 L614.42 282.13 L614.46 282.26 L614.50 282.39 L614.54 282.52 L614.58 282.65 L614.59 282.71 L614.62 282.79 L614.66 282.92 L614.70 283.05 L614.73 283.19 L614.77 283.32 L614.81 283.45 L614.85 283.59 L614.89 283.70 L614.89 283.73 L614.93 283.86 L614.97 284.00 L615.01 284.14 L615.05 284.28 L615.09 284.42 L615.13 284.56 L615.17 284.70 L615.18 284.72 L615.21 284.84 L615.25 284.98 L615.29 285.12 L615.33 285.27 L615.37 285.41 L615.41 285.56 L615.45 285.70 L615.47 285.78 L615.49 285.85 L615.53 286.00 L615.57 286.14 L615.61 286.29 L615.65 286.44 L615.69 286.59 L615.73 286.74 L615.77 286.88 L615.77 286.89 L615.81 287.04 L615.85 287.20 L615.89 287.35 L615.93 287.51 L615.97 287.66 L616.01 287.82 L616.05 287.97 L616.06 288.02 L616.09 288.13 L616.13 288.29 L616.17 288.45 L616.21 288.61 L616.25 288.77 L616.29 288.93 L616.33 289.09 L616.35 289.20 L616.37 289.26 L616.41 289.42 L616.45 289.59 L616.49 289.75 L616.53 289.92 L616.57 290.09 L616.61 290.26 L616.65 290.43 L616.65 290.43 L616.69 290.60 L616.72 290.77 L616.76 290.94 L616.80 291.11 L616.84 291.29 L616.88 291.46 L616.92 291.64 L616.94 291.71 L616.96 291.81 L617.00 291.99 L617.04 292.17 L617.08 292.35 L617.12 292.53 L617.16 292.71 L617.20 292.89 L617.23 293.04 L617.24 293.08 L617.28 293.26 L617.32 293.45 L617.36 293.63 L617.40 293.82 L617.44 294.01 L617.48 294.20 L617.52 294.39 L617.53 294.42 L617.56 294.58 L617.60 294.77 L617.64 294.96 L617.68 295.16 L617.72 295.35 L617.76 295.55 L617.80 295.75 L617.82 295.85 L617.84 295.94 L617.88 296.14 L617.92 296.34 L617.96 296.54 L618.00 296.75 L618.04 296.95 L618.08 297.15 L618.11 297.33 L618.12 297.36 L618.16 297.56 L618.20 297.77 L618.24 297.98 L618.28 298.18 L618.32 298.39 L618.36 298.60 L618.40 298.82 L618.41 298.87 L618.44 299.03 L618.48 299.24 L618.52 299.45 L618.56 299.67 L618.60 299.88 L618.64 300.10 L618.68 300.32 L618.70 300.45 L618.71 300.53 L618.75 300.75 L618.79 300.97 L618.83 301.19 L618.87 301.41 L618.91 301.63 L618.95 301.85 L618.99 302.07 L618.99 302.07 L619.03 302.29 L619.07 302.52 L619.11 302.74 L619.15 302.96 L619.19 303.18 L619.23 303.41 L619.27 303.63 L619.29 303.71 L619.31 303.85 L619.35 304.08 L619.39 304.30 L619.43 304.52 L619.47 304.74 L619.51 304.97 L619.55 305.19 L619.58 305.35 L619.59 305.41 L619.63 305.63 L619.67 305.85 L619.71 306.07 L619.75 306.28 L619.79 306.50 L619.83 306.72 L619.87 306.93 L619.87 306.95 L619.91 307.14 L619.95 307.35 L619.99 307.56 L620.03 307.77 L620.07 307.97 L620.11 308.17 L620.15 308.37 L620.17 308.47 L620.19 308.57 L620.23 308.76 L620.27 308.96 L620.31 309.14 L620.35 309.33 L620.39 309.51 L620.43 309.69 L620.46 309.83 L620.47 309.86 L620.51 310.03 L620.55 310.19 L620.59 310.35 L620.63 310.51 L620.66 310.66 L620.70 310.80 L620.74 310.94 L620.75 310.97 L620.78 311.08 L620.82 311.20 L620.86 311.33 L620.90 311.44 L620.94 311.55 L620.98 311.66 L621.02 311.75 L621.05 311.81 L621.06 311.84 L621.10 311.92 L621.14 312.00 L621.18 312.07 L621.22 312.13 L621.26 312.18 L621.30 312.23 L621.34 312.26 L621.34 312.26 L621.38 312.29 L621.42 312.32 L621.46 312.33 L621.50 312.34 L621.51 312.34 L621.54 312.33 L621.58 312.33 L621.62 312.31 L621.63 312.30 L621.66 312.28 L621.70 312.25 L621.74 312.21 L621.78 312.16 L621.82 312.11 L621.86 312.04 L621.90 311.97 L621.93 311.92 L621.94 311.90 L621.98 311.81 L622.02 311.72 L622.06 311.62 L622.10 311.52 L622.14 311.41 L622.18 311.29 L622.22 311.17 L622.22 311.16 L622.26 311.04 L622.30 310.91 L622.34 310.77 L622.38 310.63 L622.42 310.48 L622.46 310.32 L622.50 310.17 L622.51 310.09 L622.54 310.00 L622.58 309.84 L622.62 309.67 L622.65 309.49 L622.69 309.31 L622.73 309.13 L622.77 308.95 L622.81 308.80 L622.81 308.76 L622.85 308.57 L622.89 308.38 L622.93 308.18 L622.97 307.99 L623.01 307.79 L623.05 307.59 L623.09 307.38 L623.10 307.35 L623.13 307.18 L623.17 306.97 L623.21 306.76 L623.25 306.56 L623.29 306.35 L623.33 306.14 L623.37 305.92 L623.39 305.81 L623.41 305.71 L623.45 305.50 L623.49 305.28 L623.53 305.07 L623.57 304.86 L623.61 304.64 L623.65 304.43 L623.69 304.23 L623.69 304.21 L623.73 304.00 L623.77 303.78 L623.81 303.57 L623.85 303.35 L623.89 303.14 L623.93 302.92 L623.97 302.71 L623.98 302.65 L624.01 302.50 L624.05 302.28 L624.09 302.07 L624.13 301.86 L624.17 301.65 L624.21 301.43 L624.25 301.22 L624.27 301.08 L624.29 301.01 L624.33 300.81 L624.37 300.60 L624.41 300.39 L624.45 300.18 L624.49 299.98 L624.53 299.77 L624.57 299.57 L624.57 299.56 L624.61 299.36 L624.64 299.16 L624.68 298.96 L624.72 298.76 L624.76 298.56 L624.80 298.36 L624.84 298.16 L624.86 298.08 L624.88 297.96 L624.92 297.77 L624.96 297.57 L625.00 297.38 L625.04 297.19 L625.08 296.99 L625.12 296.80 L625.15 296.65 L625.16 296.61 L625.20 296.42 L625.24 296.23 L625.28 296.05 L625.32 295.86 L625.36 295.67 L625.40 295.49 L625.44 295.31 L625.45 295.28 L625.48 295.12 L625.52 294.94 L625.56 294.76 L625.60 294.58 L625.64 294.40 L625.68 294.22 L625.72 294.05 L625.74 293.96 L625.76 293.87 L625.80 293.70 L625.84 293.52 L625.88 293.35 L625.92 293.18 L625.96 293.01 L626.00 292.84 L626.03 292.69 L626.04 292.67 L626.08 292.50 L626.12 292.33 L626.16 292.17 L626.20 292.00 L626.24 291.84 L626.28 291.67 L626.32 291.51 L626.33 291.47 L626.36 291.35 L626.40 291.19 L626.44 291.03 L626.48 290.87 L626.52 290.71 L626.56 290.55 L626.59 290.39 L626.62 290.30 L626.63 290.24 L626.67 290.08 L626.71 289.93 L626.75 289.78 L626.79 289.62 L626.83 289.47 L626.87 289.32 L626.91 289.17 L626.91 289.17 L626.95 289.02 L626.99 288.87 L627.03 288.73 L627.07 288.58 L627.11 288.43 L627.15 288.29 L627.19 288.14 L627.21 288.09 L627.23 288.00 L627.27 287.86 L627.31 287.71 L627.35 287.57 L627.39 287.43 L627.43 287.29 L627.47 287.15 L627.50 287.05 L627.51 287.01 L627.55 286.88 L627.59 286.74 L627.63 286.60 L627.67 286.47 L627.71 286.33 L627.75 286.20 L627.79 286.06 L627.79 286.05 L627.83 285.93 L627.87 285.80 L627.91 285.67 L627.95 285.53 L627.99 285.40 L628.03 285.27 L628.07 285.15 L628.09 285.08 L628.11 285.02 L628.15 284.89 L628.19 284.76 L628.23 284.64 L628.27 284.51 L628.31 284.38 L628.35 284.26 L628.38 284.15 L628.39 284.13 L628.43 284.01 L628.47 283.89 L628.51 283.77 L628.55 283.64 L628.58 283.52 L628.62 283.40 L628.66 283.28 L628.67 283.26 L628.70 283.16 L628.74 283.04 L628.78 282.93 L628.82 282.81 L628.86 282.69 L628.90 282.57 L628.94 282.46 L628.97 282.39 L628.98 282.34 L629.02 282.23 L629.06 282.11 L629.10 282.00 L629.14 281.88 L629.18 281.77 L629.22 281.66 L629.26 281.55 L629.26 281.55 L629.30 281.44 L629.34 281.32 L629.38 281.21 L629.42 281.10 L629.46 280.99 L629.50 280.89 L629.54 280.78 L629.55 280.74 L629.85 279.96 L630.14 279.20 L630.43 278.46 L630.73 277.74 L631.02 277.05 L631.31 276.37 L631.61 275.72 L631.90 275.08 L632.19 274.45 L632.49 273.85 L632.78 273.26 L633.07 272.68 L633.37 272.12 L633.66 271.57 L633.95 271.04 L634.25 270.51 L634.54 270.00 L634.83 269.50 L635.13 269.01 L635.42 268.53 L635.71 268.06 L636.01 267.60 L636.30 267.15 L636.59 266.71 L636.89 266.28 L637.18 265.86 L637.47 265.44 L637.77 265.03 L638.06 264.63 L638.35 264.24 L638.65 263.85 L638.94 263.47 L639.23 263.09 L639.53 262.73 L639.82 262.37 L640.11 262.01 L640.41 261.66 L640.70 261.32 L640.99 260.98 L641.29 260.65 L641.58 260.32 L641.87 259.99 L642.17 259.68 L642.46 259.36 L642.75 259.05 L643.05 258.75 L643.34 258.45 L643.63 258.15 L643.93 257.86 L644.22 257.57 L644.51 257.29 L644.81 257.01 L645.10 256.73 L645.39 256.46 L645.69 256.19 L645.98 255.93 L646.27 255.67 L646.57 255.41 L646.86 255.15 L647.15 254.90 L647.45 254.65 L647.74 254.40 L648.03 254.16 L648.33 253.92 L648.62 253.68 L648.91 253.45 L649.21 253.22 L649.50 252.99 L649.79 252.76 L650.09 252.54 L650.38 252.31 L650.67 252.09 L650.97 251.88 L651.26 251.66 L651.55 251.45 L651.85 251.24 L652.14 251.03 L652.43 250.83 L652.73 250.62 L653.02 250.42 L653.31 250.22 L653.61 250.03 L653.90 249.83 L654.19 249.64 L654.49 249.45 L654.78 249.26 L655.07 249.07 L655.37 248.89 L655.66 248.70 L655.95 248.52 L656.25 248.34 L656.54 248.16 L656.83 247.98 L657.13 247.81 L657.42 247.64 L657.71 247.46 L658.01 247.29 L658.30 247.12 L658.59 246.96 L658.89 246.79 L659.18 246.63 L659.47 246.46 L659.77 246.30 L660.06 246.14 L660.35 245.98 L660.65 245.83 L660.94 245.67 L661.23 245.52 L661.53 245.36 L661.82 245.21 L662.11 245.06 L662.41 244.91 L662.70 244.76 L662.99 244.62 L663.29 244.47 L663.58 244.33 L663.87 244.18 L664.17 244.04 L664.46 243.90 L664.75 243.76 L665.05 243.62 L665.34 243.48 L665.63 243.35 L665.93 243.21 L666.22 243.08 L666.51 242.94 L666.81 242.81 L667.10 242.68 L667.39 242.55 L667.69 242.42 L667.98 242.29 L668.27 242.16 L668.57 242.04 L668.86 241.91 L669.15 241.79 L669.45 241.66 L669.74 241.54 L670.03 241.42 L670.33 241.30 L670.62 241.18 L670.91 241.06 L671.21 240.94 L671.50 240.82 L671.79 240.71 L672.09 240.59 L672.38 240.48 L672.67 240.36 L672.97 240.25 L673.26 240.14 L673.55 240.02 L673.85 239.91 L674.14 239.80 L674.43 239.69 L674.73 239.59 L675.02 239.48 L675.31 239.37 L675.61 239.26 L675.90 239.16 L676.19 239.05 L676.49 238.95 L676.78 238.85 L677.07 238.74 L677.37 238.64 L677.66 238.54 L677.95 238.44 L678.25 238.34 L678.54 238.24 L678.83 238.14 L679.13 238.04 L679.42 237.95 L679.71 237.85 L680.01 237.75 L680.30 237.66 L680.59 237.56 L680.89 237.47 L681.18 237.37 L681.47 237.28 L681.77 237.19 L682.06 237.10 L682.35 237.01 L682.65 236.92 L682.94 236.83 L683.23 236.74 L683.53 236.65 L683.82 236.56 L684.11 236.47 L684.41 236.38 L684.70 236.30 L684.99 236.21 L685.29 236.13 L685.58 236.04 L685.87 235.96 L686.17 235.87 L686.46 235.79 L686.75 235.70 L687.05 235.62 L687.34 235.54 L687.63 235.46 L687.93 235.38 L688.22 235.30 L688.51 235.22 L688.81 235.14 L689.10 235.06 L689.39 234.98 L689.69 234.90 L689.98 234.83 L690.27 234.75 L690.57 234.67 L690.86 234.60 L691.15 234.52 L691.45 234.44 L691.74 234.37 L692.03 234.30 L692.33 234.22 L692.62 234.15 L692.91 234.08 L693.21 234.00 L693.50 233.93 L693.79 233.86 L694.09 233.79 L694.38 233.72 L694.67 233.65 L694.97 233.58 L695.26 233.51 L695.55 233.44 L695.85 233.37 L696.14 233.30 L696.43 233.23 L696.73 233.16 L697.02 233.10 L697.31 233.03 L697.61 232.96 L697.90 232.90 L698.19 232.83 L698.49 232.77 L698.78 232.70 L699.07 232.64 L699.37 232.57 L699.66 232.51 L699.95 232.45 L700.25 232.38 L700.54 232.32 L700.83 232.26 L701.13 232.19 L701.42 232.13 L701.71 232.07 L702.01 232.01 L702.30 231.95 L702.59 231.89 L702.89 231.83 L703.18 231.77 L703.47 231.71 L703.77 231.65 L704.06 231.59 L704.35 231.53 L704.65 231.47 L704.94 231.42 L705.23 231.36 L705.53 231.30 L705.82 231.24 L706.11 231.19 L706.41 231.13 L706.70 231.07 L706.99 231.02 L707.29 230.96 L707.58 230.91 L707.87 230.85 L708.17 230.80 L708.46 230.74 L708.75 230.69 L709.05 230.63 L709.34 230.58 L709.63 230.52 L709.93 230.47 L710.22 230.42 L710.51 230.36 L710.81 230.31 L711.10 230.26 L711.39 230.21 L711.69 230.15 L711.98 230.10 L712.27 230.05 L712.57 230.00 L712.86 229.95 L713.15 229.90 L713.45 229.85 L713.74 229.80 L714.03 229.75 L714.33 229.70 L714.62 229.65 L714.91 229.60 L715.21 229.55 L715.50 229.50 L715.79 229.45 L716.09 229.40 L716.38 229.35 L716.67 229.30 L716.97 229.26 L717.26 229.21 L717.55 229.16 L717.85 229.11 L718.14 229.07 L718.43 229.02 L718.73 228.97 L719.02 228.92 L719.31 228.88 L719.61 228.83 L719.90 228.79 L720.19 228.74 L720.49 228.69 L720.78 228.65 L721.07 228.60 L721.37 228.56 L721.66 228.51 L721.95 228.47 L722.25 228.42 L722.54 228.38 L722.83 228.33 L723.13 228.29 L723.42 228.24 L723.71 228.20 L724.01 228.15 L724.30 228.11 L724.59 228.07 L724.89 228.02 L725.18 227.98 L725.47 227.94 L725.77 227.89 L726.06 227.85 L726.35 227.81 L726.65 227.77 L726.94 227.72 L727.23 227.68 L727.53 227.64 L727.82 227.60 L728.11 227.55 L728.41 227.51 L728.70 227.47 L728.99 227.43 L729.29 227.39 L729.58 227.35 L729.87 227.30 L730.17 227.26 L730.46 227.22 L730.75 227.18 L731.05 227.14 L731.34 227.10 L731.63 227.06 L731.93 227.02 L732.22 226.98 L732.51 226.94 L732.81 226.90 L733.10 226.86 L733.39 226.82 L733.69 226.78 L733.98 226.74 L734.27 226.70 L734.57 226.66 L734.86 226.62 L735.15 226.58 L735.45 226.54 L735.74 226.50 L736.03 226.46 L736.33 226.42 L736.62 226.38 L736.91 226.35 L737.21 226.31 L737.50 226.27 L737.79 226.23 L738.09 226.19 L738.38 226.15 L738.67 226.11 L738.97 226.08 L739.26 226.04 L739.55 226.00 L739.85 225.96 L740.14 225.92 L740.43 225.89 L740.73 225.85 L741.02 225.81 L741.31 225.77 L741.61 225.74 L741.90 225.70 L742.19 225.66 L742.49 225.62 L742.78 225.59 L743.07 225.55 L743.37 225.51 L743.66 225.48 L743.95 225.44 L744.25 225.40 L744.54 225.37 L744.83 225.33 L745.13 225.29 L745.42 225.26 L745.71 225.22 L746.01 225.18 L746.30 225.15 L746.59 225.11 L746.89 225.07 L747.18 225.04 L747.47 225.00 L747.77 224.97 L748.06 224.93 L748.35 224.90 L748.65 224.86 L748.94 224.82 L749.23 224.79 L749.53 224.75 L749.82 224.72 L750.11 224.68 L750.41 224.65 L750.70 224.61 L750.99 224.58 L751.29 224.54 L751.58 224.51 L751.87 224.47 L752.17 224.44 L752.46 224.40 L752.75 224.37 L753.05 224.33 L753.34 224.30 L753.63 224.26 L753.93 224.23 L754.22 224.19 L754.51 224.16 L754.81 224.12 L755.10 224.09 L755.39 224.05 L755.69 224.02 L755.98 223.99 L756.27 223.95 L756.57 223.92 L756.86 223.88 L757.15 223.85 L757.45 223.82 L757.74 223.78 L758.03 223.75 L758.33 223.71 L758.62 223.68 L758.91 223.65 L759.21 223.61 L759.50 223.58 L759.79 223.55 L760.09 223.51 L760.38 223.48 L760.67 223.45 L760.97 223.41 L761.26 223.38 L761.55 223.35 L761.85 223.31 L762.14 223.28 L762.43 223.25 L762.73 223.21 L763.02 223.18 L763.31 223.15 L763.61 223.11 L763.90 223.08 L764.19 223.05 L764.49 223.01 L764.78 222.98 L765.07 222.94 L765.37 222.91 L765.66 222.87 L765.95 222.84 L766.25 222.80 L766.54 222.76 L766.83 222.72 L767.13 222.68 L767.42 222.65 L767.71 222.61 L768.01 222.57 L768.30 222.53 L768.59 222.49 L768.89 222.45 L769.18 222.41 L769.47 222.36 L769.77 222.32 L770.06 222.28 L770.35 222.24 L770.65 222.20 L770.94 222.16 L771.23 222.11 L771.53 222.07 L771.82 222.03 L772.11 221.98 L772.41 221.94 L772.70 221.90 L772.99 221.85 L773.29 221.81 L773.58 221.76 L773.87 221.72 L774.17 221.68 L774.46 221.63 L774.75 221.59 L775.05 221.54 L775.34 221.50 L775.63 221.45 L775.93 221.41 L776.22 221.36 L776.51 221.32 L776.81 221.27 L777.10 221.23 L777.39 221.18 L777.69 221.14 L777.98 221.09 L778.27 221.05 L778.57 221.00 L778.86 220.96 L779.15 220.91 L779.45 220.87 L779.74 220.83 L780.03 220.78 L780.33 220.74 L780.62 220.69 L780.91 220.65 L781.21 220.60 L781.50 220.56 L781.79 220.52 L782.09 220.47 L782.38 220.43 L782.67 220.39 L782.97 220.34 L783.26 220.30 L783.55 220.26 L783.85 220.21 L784.14 220.17 L784.43 220.13 L784.73 220.09 L785.02 220.04 L785.31 220.00 L785.61 219.96 L785.90 219.92 L786.19 219.88 L786.49 219.84 L786.78 219.80 L787.07 219.76 L787.37 219.71 L787.66 219.67 L787.95 219.63 L788.25 219.59 L788.54 219.56 L788.83 219.52 L789.13 219.48 L789.42 219.44 L789.71 219.40 L790.01 219.36 L790.30 219.32 L790.59 219.29 L790.89 219.25 L791.18 219.21 L791.47 219.18 L791.77 219.14 L792.06 219.10 L792.35 219.07 L792.65 219.03 L792.94 219.00 L793.23 218.96 L793.53 218.93 L793.82 218.89 L794.11 218.86 L794.41 218.82 L794.70 218.79 L794.99 218.75 L795.29 218.72 L795.58 218.69 L795.87 218.66 L796.17 218.62 L796.46 218.59 L796.75 218.56 L797.05 218.53 L797.34 218.50 L797.63 218.47 L797.93 218.44 L798.22 218.41 L798.51 218.38 L798.81 218.35 L799.10 218.32 L799.39 218.29 L799.69 218.26 L799.98 218.23 L800.27 218.20 L800.57 218.17 L800.86 218.15 L801.15 218.12 L801.45 218.09 L801.74 218.06 L802.03 218.03 L802.33 218.01 L802.62 217.98 L802.91 217.95 L803.21 217.93 L803.50 217.90 L803.79 217.87 L804.09 217.85 L804.38 217.82 L804.67 217.79 L804.97 217.77 L805.26 217.74 L805.55 217.72 L805.85 217.69 L806.14 217.67 L806.43 217.64 L806.73 217.62 L807.02 217.59 L807.31 217.57 L807.61 217.54 L807.90 217.52 L808.19 217.49 L808.49 217.47 L808.78 217.44 L809.07 217.42 L809.37 217.40 L809.66 217.37 L809.95 217.35 L810.25 217.32 L810.54 217.30 L810.83 217.28 L811.13 217.25 L811.42 217.23 L811.71 217.21 L812.01 217.19 L812.30 217.16 L812.59 217.14 L812.89 217.12 L813.18 217.10 L813.47 217.07 L813.77 217.05 L814.06 217.03 L814.35 217.01 L814.65 216.98 L814.94 216.96 L815.23 216.94 L815.53 216.92 L815.82 216.90 L816.11 216.88 L816.41 216.85 L816.70 216.83 L816.99 216.81 L817.29 216.79 L817.58 216.77 L817.87 216.75 L818.17 216.73 L818.46 216.71 L818.75 216.69 L819.05 216.67 L819.34 216.65 L819.63 216.63 L819.93 216.61 L820.22 216.59 L820.51 216.57 L820.81 216.55 L821.10 216.53 L821.39 216.51 L821.69 216.49 L821.98 216.47 L822.27 216.45 L822.57 216.43 L822.86 216.41 L823.15 216.39 L823.45 216.37 L823.74 216.35 L824.03 216.33 L824.33 216.31 L824.62 216.29 L824.91 216.27 L825.21 216.25 L825.50 216.24 L825.79 216.22 L826.09 216.20 L826.38 216.18 L826.67 216.16 L826.97 216.14 L827.26 216.13 L827.55 216.11 L827.85 216.09 L828.14 216.07 L828.43 216.05 L828.73 216.03 L829.02 216.02 L829.31 216.00 L829.61 215.98 L829.90 215.96 L830.19 215.95 L830.49 215.93 L830.78 215.91 L831.07 215.89 L831.37 215.88 L831.66 215.86 L831.95 215.84 L832.25 215.82 L832.54 215.81 L832.83 215.79 L833.13 215.77 L833.42 215.76 L833.71 215.74 L834.01 215.72 L834.30 215.71 L834.59 215.69 L834.89 215.67 L835.18 215.66 L835.47 215.64 L835.77 215.62 L836.06 215.61 L836.35 215.59 L836.65 215.57 L836.94 215.56 L837.23 215.54 L837.53 215.53 L837.82 215.51 L838.11 215.49 L838.41 215.48 L838.70 215.46 L838.99 215.45 L839.29 215.43 L839.58 215.41 L839.87 215.40 L840.17 215.38 L840.46 215.37 L840.75 215.35 L841.05 215.34 L841.34 215.32 L841.63 215.31 L841.93 215.29 L842.22 215.28 L842.51 215.26 L842.81 215.25 L843.10 215.23 L843.39 215.22 L843.69 215.20 L843.98 215.19 L844.27 215.17 L844.57 215.16 L844.86 215.14 L845.15 215.13 L845.45 215.11 L845.74 215.10 L846.03 215.08 L846.33 215.07 L846.62 215.06 L846.91 215.04 L847.21 215.03 L847.50 215.01 L847.79 215.00 L848.09 214.99 L848.38 214.97 L848.67 214.96 L848.97 214.95 L849.26 214.93 L849.55 214.92 L849.85 214.91 L850.14 214.89 L850.43 214.88 L850.73 214.87 L851.02 214.85 L851.31 214.84 L851.61 214.83 L851.90 214.82 L852.19 214.80 L852.49 214.79 L852.78 214.78 L853.07 214.77 L853.37 214.75 L853.66 214.74 L853.95 214.73 L854.25 214.72 L854.54 214.70 L854.83 214.69 L855.13 214.68 L855.42 214.67 L855.71 214.66 L856.01 214.64 L856.30 214.63 L856.59 214.62 L856.89 214.61 L857.18 214.60 L857.47 214.59 L857.77 214.58 L858.06 214.57 L858.35 214.55 L858.65 214.54 L858.94 214.53 L859.23 214.52 L859.53 214.51 L859.82 214.50 L860.11 214.49 L860.41 214.48 L860.70 214.47 L860.99 214.46 L861.29 214.45 L861.58 214.44 L861.87 214.43 L862.17 214.42 L862.46 214.41 L862.75 214.40 L863.05 214.39 L863.34 214.38 L863.63 214.37 L863.93 214.36 L864.22 214.35 L864.51 214.34 L864.81 214.33 L865.10 214.32 L865.39 214.31 L865.69 214.30 L865.98 214.29 L866.27 214.28 L866.57 214.27 L866.86 214.26 L867.15 214.25 L867.45 214.25 L867.74 214.24 L868.03 214.23 L868.33 214.22 L868.62 214.21 L868.91 214.20 L869.21 214.19 L869.50 214.19" fill="none" stroke="#00ffff" stroke-width="1.0" stroke-linejoin="round" shape-rendering="crispEdges"/>
<path d="M517.5 213.2 L514.5 223.2 L513.5 223.2 L513.5 225.0 L521.5 225.0 L521.5 223.2 L520.5 223.2 Z" fill="none" stroke="#00ffff" stroke-width="1" stroke-linejoin="miter" shape-rendering="crispEdges"/>
<text x="517.5" y="235.991361" fill="#00ffff" font-size="13.33" font-family='"Liberation Mono", monospace' text-anchor="middle"  xml:space="preserve">1</text>
<path d="M524.5 213.8 L521.5 223.8 L520.5 223.8 L520.5 225.6 L528.5 225.6 L528.5 223.8 L527.5 223.8 Z" fill="none" stroke="#00ffff" stroke-width="1" stroke-linejoin="miter" shape-rendering="crispEdges"/>
<text x="524.5" y="236.627826" fill="#00ffff" font-size="13.33" font-family='"Liberation Mono", monospace' text-anchor="middle"  xml:space="preserve">2</text>
<path d="M533.5 215.3 L530.5 225.3 L529.5 225.3 L529.5 227.1 L537.5 227.1 L537.5 225.3 L536.5 225.3 Z" fill="none" stroke="#00ffff" stroke-width="1" stroke-linejoin="miter" shape-rendering="crispEdges"/>
<text x="533.5" y="238.105324" fill="#00ffff" font-size="13.33" font-family='"Liberation Mono", monospace' text-anchor="middle"  xml:space="preserve">3</text>
<path d="M560.5 224.8 L557.5 234.8 L556.5 234.8 L556.5 236.6 L564.5 236.6 L564.5 234.8 L563.5 234.8 Z" fill="none" stroke="#00ffff" stroke-width="1" stroke-linejoin="miter" shape-rendering="crispEdges"/>
<text x="560.5" y="247.615488" fill="#00ffff" font-size="13.33" font-family='"Liberation Mono", monospace' text-anchor="middle"  xml:space="preserve">4</text>
<path d="M604.5 261.1 L601.5 271.1 L600.5 271.1 L600.5 272.9 L608.5 272.9 L608.5 271.1 L607.5 271.1 Z" fill="none" stroke="#00ffff" stroke-width="1" stroke-linejoin="miter" shape-rendering="crispEdges"/>
<text x="604.5" y="283.90720000000005" fill="#00ffff" font-size="13.33" font-family='"Liberation Mono", monospace' text-anchor="middle"  xml:space="preserve">5</text>
<path d="M692.5 233.4 L689.5 243.4 L688.5 243.4 L688.5 245.2 L696.5 245.2 L696.5 243.4 L695.5 243.4 Z" fill="none" stroke="#00ffff" stroke-width="1" stroke-linejoin="miter" shape-rendering="crispEdges"/>
<text x="692.5" y="256.161541" fill="#00ffff" font-size="13.33" font-family='"Liberation Mono", monospace' text-anchor="middle"  xml:space="preserve">6</text>
<path d="M869.5 214.2 L866.5 224.2 L865.5 224.2 L865.5 226.0 L873.5 226.0 L873.5 224.2 L872.5 224.2 Z" fill="none" stroke="#00ffff" stroke-width="1" stroke-linejoin="miter" shape-rendering="crispEdges"/>
<text x="869.5" y="236.983853" fill="#00ffff" font-size="13.33" font-family='"Liberation Mono", monospace' text-anchor="middle"  xml:space="preserve">7</text>
<path d="M621.5 312.3 L618.5 302.3 L617.5 302.3 L617.5 300.5 L625.5 300.5 L625.5 302.3 L624.5 302.3 Z" fill="none" stroke="#00ffff" stroke-width="1.2" shape-rendering="crispEdges"/>
<text x="621.5" y="296.33631" fill="#00ffff" font-size="13.33" font-family='"Liberation Mono", monospace' text-anchor="middle"  xml:space="preserve">8</text>
<path d="M517.5 354.0 L510.5 361.5 L524.5 361.5 Z" fill="none" stroke="#00ffff" stroke-width="1" shape-rendering="crispEdges"/>
<path d="M524.5 354.0 L517.5 361.5 L531.5 361.5 Z" fill="none" stroke="#00ffff" stroke-width="1" shape-rendering="crispEdges"/>
<path d="M533.5 354.0 L526.5 361.5 L540.5 361.5 Z" fill="none" stroke="#00ffff" stroke-width="1" shape-rendering="crispEdges"/>
<path d="M560.5 354.0 L553.5 361.5 L567.5 361.5 Z" fill="none" stroke="#00ffff" stroke-width="1" shape-rendering="crispEdges"/>
<path d="M604.5 354.0 L597.5 361.5 L611.5 361.5 Z" fill="none" stroke="#00ffff" stroke-width="1" shape-rendering="crispEdges"/>
<path d="M692.5 354.0 L685.5 361.5 L699.5 361.5 Z" fill="none" stroke="#00ffff" stroke-width="1" shape-rendering="crispEdges"/>
<path d="M869.5 354.0 L862.5 361.5 L876.5 361.5 Z" fill="none" stroke="#00ffff" stroke-width="1" shape-rendering="crispEdges"/>
<path d="M621.5 354.0 L614.5 361.5 L628.5 361.5 Z" fill="#00ffff" stroke="#00ffff" stroke-width="1" shape-rendering="crispEdges"/>
<path d="M517 212.5 L509 205.0 L509 220.0 Z" fill="#00ffff"/>
<path d="M870 212.5 L878 205.0 L878 220.0 Z" fill="#00ffff"/>
<text x="15" y="376" fill="#ff00ff" font-size="13.33" font-family='"Liberation Mono", monospace' text-anchor="start"  xml:space="preserve">Tr3 S33 Smith (R+jX) Scale 1.000U [F2]</text>
<circle cx="245.47" cy="531.5" r="117.83" fill="none" stroke="#363636" stroke-width="1"/>
<circle cx="269.03" cy="531.5" r="94.27" fill="none" stroke="#363636" stroke-width="1"/>
<circle cx="292.60" cy="531.5" r="70.70" fill="none" stroke="#363636" stroke-width="1"/>
<circle cx="316.17" cy="531.5" r="47.13" fill="none" stroke="#363636" stroke-width="1"/>
<circle cx="339.73" cy="531.5" r="23.57" fill="none" stroke="#363636" stroke-width="1"/>
<clipPath id="sc"><circle cx="221.9" cy="531.5" r="141.4"/></clipPath>
<g clip-path="url(#sc)">
<circle cx="363.30" cy="3.79" r="527.71" fill="none" stroke="#363636" stroke-width="1"/>
<circle cx="363.30" cy="1059.21" r="527.71" fill="none" stroke="#363636" stroke-width="1"/>
<circle cx="363.30" cy="286.59" r="244.91" fill="none" stroke="#363636" stroke-width="1"/>
<circle cx="363.30" cy="776.41" r="244.91" fill="none" stroke="#363636" stroke-width="1"/>
<circle cx="363.30" cy="390.10" r="141.40" fill="none" stroke="#363636" stroke-width="1"/>
<circle cx="363.30" cy="672.90" r="141.40" fill="none" stroke="#363636" stroke-width="1"/>
<circle cx="363.30" cy="449.86" r="81.64" fill="none" stroke="#363636" stroke-width="1"/>
<circle cx="363.30" cy="613.14" r="81.64" fill="none" stroke="#363636" stroke-width="1"/>
<circle cx="363.30" cy="493.61" r="37.89" fill="none" stroke="#363636" stroke-width="1"/>
<circle cx="363.30" cy="569.39" r="37.89" fill="none" stroke="#363636" stroke-width="1"/>
</g>
<circle cx="221.9" cy="531.5" r="141.4" fill="none" stroke="#a0a0a0" stroke-width="1"/>
<line x1="80.5" y1="531.5" x2="363.3" y2="531.5" stroke="#a0a0a0" stroke-width="1"/>
<text x="20" y="402" fill="#ff00ff" font-size="13.33" font-family='"Liberation Mono", monospace' text-anchor="start"  xml:space="preserve"> 1  100.00000 MHz  50.708 Ω  4.2664 Ω  6.7902 nH</text>
<text x="20" y="415" fill="#ff00ff" font-size="13.33" font-family='"Liberation Mono", monospace' text-anchor="start"  xml:space="preserve"> 2  500.00000 MHz  51.529 Ω  19.909 Ω  6.3374 nH</text>
<text x="20" y="428" fill="#ff00ff" font-size="13.33" font-family='"Liberation Mono", monospace' text-anchor="start"  xml:space="preserve"> 3  1.0000000 GHz  52.103 Ω  40.613 Ω  6.4637 nH</text>
<text x="20" y="441" fill="#ff00ff" font-size="13.33" font-family='"Liberation Mono", monospace' text-anchor="start"  xml:space="preserve"> 4  2.5000000 GHz  52.015 Ω  121.23 Ω  7.7178 nH</text>
<text x="20" y="454" fill="#ff00ff" font-size="13.33" font-family='"Liberation Mono", monospace' text-anchor="start"  xml:space="preserve"> 5  5.0000000 GHz  32.127 Ω  399.50 Ω  12.717 nH</text>
<text x="20" y="467" fill="#ff00ff" font-size="13.33" font-family='"Liberation Mono", monospace' text-anchor="start"  xml:space="preserve"> 6  10.000000 GHz  42.087 Ω -188.86 Ω  84.271 fF</text>
<text x="20" y="480" fill="#ff00ff" font-size="13.33" font-family='"Liberation Mono", monospace' text-anchor="start"  xml:space="preserve"> 7  20.000000 GHz  63.900 Ω -33.140 Ω  240.13 fF</text>
<text x="20" y="493" fill="#ff00ff" font-size="13.33" font-family='"Liberation Mono", monospace' text-anchor="start"  xml:space="preserve">&gt;8  5.9450751 GHz  61.339 Ω  802.89 Ω  21.494 nH</text>
<path d="M222.60 530.00 L222.62 529.81 L222.64 529.60 L222.65 529.37 L222.67 529.11 L222.69 528.83 L222.72 528.50 L222.76 528.14 L222.80 527.73 L222.86 527.28 L222.94 526.77 L223.03 526.20 L223.15 525.56 L223.28 524.84 L223.43 524.02 L223.60 523.11 L223.78 522.13 L223.98 521.11 L224.18 520.05 L224.40 518.98 L224.63 517.91 L224.86 516.86 L225.10 515.85 L225.35 514.89 L225.60 514.00 L225.85 513.18 L226.11 512.40 L226.37 511.66 L226.63 510.95 L226.91 510.26 L227.19 509.58 L227.48 508.90 L227.79 508.21 L228.11 507.51 L228.45 506.77 L228.81 506.01 L229.19 505.20 L229.58 504.35 L229.98 503.46 L230.39 502.54 L230.82 501.60 L231.26 500.65 L231.72 499.68 L232.19 498.71 L232.69 497.74 L233.20 496.78 L233.74 495.83 L234.31 494.90 L234.90 494.00 L235.51 493.13 L236.13 492.29 L236.76 491.47 L237.41 490.66 L238.09 489.86 L238.79 489.06 L239.51 488.26 L240.28 487.44 L241.07 486.61 L241.91 485.75 L242.80 484.86 L243.73 483.94 L244.72 482.96 L245.75 481.92 L246.84 480.83 L247.96 479.70 L249.13 478.57 L250.32 477.42 L251.55 476.29 L252.79 475.18 L254.05 474.12 L255.33 473.10 L256.61 472.16 L257.90 471.30 L259.21 470.51 L260.55 469.76 L261.93 469.05 L263.33 468.39 L264.74 467.76 L266.17 467.17 L267.61 466.62 L269.04 466.11 L270.46 465.63 L271.86 465.19 L273.25 464.78 L274.60 464.40 L275.93 464.06 L277.24 463.78 L278.53 463.53 L279.81 463.33 L281.09 463.17 L282.35 463.03 L283.62 462.92 L284.88 462.83 L286.15 462.76 L287.42 462.70 L288.71 462.65 L290.00 462.60 L291.34 462.57 L292.73 462.56 L294.16 462.58 L295.61 462.62 L297.06 462.68 L298.50 462.75 L299.90 462.83 L301.26 462.92 L302.55 463.00 L303.75 463.08 L304.86 463.15 L305.84 463.22 L306.68 463.26 L307.37 463.29 L307.95 463.31 L308.43 463.32 L308.85 463.33 L309.22 463.35 L309.58 463.38 L309.95 463.43 L310.35 463.50 L310.81 463.60 L311.35 463.73 L312.00 463.90 L312.75 464.11 L313.55 464.35 L314.41 464.61 L315.31 464.91 L316.24 465.22 L317.20 465.56 L318.17 465.91 L319.15 466.27 L320.14 466.64 L321.11 467.03 L322.07 467.41 L323.00 467.80 L323.92 468.18 L324.83 468.56 L325.75 468.94 L326.67 469.33 L327.58 469.72 L328.50 470.13 L329.42 470.56 L330.33 471.02 L331.25 471.51 L332.17 472.03 L333.08 472.59 L334.00 473.20 L334.93 473.87 L335.87 474.59 L336.83 475.36 L337.79 476.18 L338.76 477.02 L339.71 477.89 L340.66 478.76 L341.59 479.64 L342.49 480.52 L343.36 481.37 L344.20 482.20 L345.00 483.00 L345.76 483.78 L346.51 484.56 L347.23 485.34 L347.93 486.12 L348.60 486.89 L349.26 487.65 L349.88 488.40 L350.48 489.13 L351.05 489.84 L351.60 490.52 L352.11 491.18 L352.60 491.80 L353.04 492.36 L353.43 492.84 L353.78 493.27 L354.09 493.65 L354.38 494.02 L354.64 494.38 L354.90 494.76 L355.15 495.17 L355.41 495.63 L355.69 496.17 L355.99 496.80 L356.32 497.54 L356.69 498.41 L357.09 499.39 L357.52 500.47 L357.96 501.62 L358.41 502.83 L358.86 504.07 L359.30 505.32 L359.71 506.56 L360.10 507.77 L360.45 508.93 L360.75 510.01 L361.00 511.00 L361.19 511.90 L361.34 512.73 L361.45 513.52 L361.53 514.26 L361.58 514.96 L361.60 515.65 L361.60 516.33 L361.59 517.02 L361.57 517.71 L361.55 518.44 L361.52 519.19 L361.50 520.00 L361.48 520.80 L361.47 521.56 L361.45 522.28 L361.43 523.00 L361.40 523.74 L361.35 524.51 L361.29 525.33 L361.20 526.23 L361.10 527.23 L360.96 528.34 L360.80 529.59 L360.60 531.00 L360.36 532.63 L360.09 534.51 L359.79 536.57 L359.46 538.79 L359.11 541.09 L358.74 543.45 L358.35 545.81 L357.95 548.11 L357.54 550.33 L357.13 552.39 L356.71 554.27 L356.30 555.90 L355.88 557.32 L355.45 558.59 L355.00 559.73 L354.55 560.76 L354.08 561.70 L353.61 562.55 L353.14 563.34 L352.66 564.08 L352.19 564.79 L351.72 565.49 L351.26 566.19 L350.80 566.90 L350.37 567.56 L349.98 568.10 L349.61 568.56 L349.26 568.95 L348.90 569.32 L348.54 569.68 L348.15 570.06 L347.73 570.50 L347.27 571.03 L346.75 571.67 L346.16 572.45 L345.50 573.40 L344.71 574.59 L343.79 576.01 L342.75 577.63 L341.64 579.39 L340.49 581.23 L339.32 583.10 L338.17 584.95 L337.07 586.72 L336.06 588.37 L335.15 589.83 L334.39 591.05 L333.81 591.99" fill="none" stroke="#ff00ff" stroke-width="1.0" stroke-linejoin="round" shape-rendering="crispEdges"/>
<path d="M333.81 591.99 L333.39 592.07 L332.88 592.19 L332.29 592.34 L331.63 592.50 L330.90 592.67 L330.13 592.85 L329.31 593.02 L328.47 593.18 L327.60 593.31 L326.73 593.42 L325.86 593.48 L325.00 593.50 L324.15 593.46 L323.30 593.37 L322.43 593.24 L321.56 593.08 L320.66 592.89 L319.74 592.69 L318.79 592.49 L317.80 592.30 L316.77 592.12 L315.70 591.98 L314.58 591.86 L313.40 591.80 L312.18 591.79 L310.92 591.84 L309.63 591.93 L308.30 592.04 L306.93 592.18 L305.51 592.32 L304.05 592.45 L302.55 592.57 L300.99 592.65 L299.38 592.69 L297.72 592.68 L296.00 592.60 L294.16 592.46 L292.15 592.29 L290.01 592.09 L287.79 591.85 L285.52 591.58 L283.23 591.29 L280.97 590.96 L278.78 590.61 L276.69 590.24 L274.73 589.85 L272.96 589.43 L271.40 589.00 L270.06 588.55 L268.90 588.08 L267.89 587.58 L267.01 587.07 L266.23 586.53 L265.52 585.96 L264.87 585.37 L264.25 584.76 L263.62 584.11 L262.97 583.44 L262.27 582.73 L261.50 582.00 L260.66 581.21 L259.78 580.34 L258.88 579.42 L257.97 578.45 L257.06 577.46 L256.16 576.45 L255.29 575.45 L254.45 574.46 L253.66 573.51 L252.93 572.60 L252.27 571.76 L251.70 571.00 L251.21 570.30 L250.79 569.62 L250.43 568.97 L250.13 568.35 L249.87 567.76 L249.66 567.21 L249.48 566.70 L249.33 566.23 L249.20 565.80 L249.08 565.42 L248.96 565.09 L248.85 564.80" fill="none" stroke="#ff00ff" stroke-width="1.0" stroke-linejoin="round" shape-rendering="crispEdges"/>
<path d="M223.1 525.6 L220.1 535.6 L219.1 535.6 L219.1 537.4 L227.1 537.4 L227.1 535.6 L226.1 535.6 Z" fill="none" stroke="#ff00ff" stroke-width="1" stroke-linejoin="miter" shape-rendering="crispEdges"/>
<text x="223.1456109705827" y="548.3624907122065" fill="#ff00ff" font-size="13.33" font-family='"Liberation Mono", monospace' text-anchor="middle"  xml:space="preserve">1</text>
<path d="M229.2 505.2 L226.2 515.2 L225.2 515.2 L225.2 517.0 L233.2 517.0 L233.2 515.2 L232.2 515.2 Z" fill="none" stroke="#ff00ff" stroke-width="1" stroke-linejoin="miter" shape-rendering="crispEdges"/>
<text x="229.18638059167435" y="528.0014247279067" fill="#ff00ff" font-size="13.33" font-family='"Liberation Mono", monospace' text-anchor="middle"  xml:space="preserve">2</text>
<path d="M243.7 483.9 L240.7 493.9 L239.7 493.9 L239.7 495.7 L247.7 495.7 L247.7 493.9 L246.7 493.9 Z" fill="none" stroke="#ff00ff" stroke-width="1" stroke-linejoin="miter" shape-rendering="crispEdges"/>
<text x="243.7303459256099" y="506.7393763070311" fill="#ff00ff" font-size="13.33" font-family='"Liberation Mono", monospace' text-anchor="middle"  xml:space="preserve">3</text>
<path d="M305.8 463.2 L302.8 473.2 L301.8 473.2 L301.8 475.0 L309.8 475.0 L309.8 473.2 L308.8 473.2 Z" fill="none" stroke="#ff00ff" stroke-width="1" stroke-linejoin="miter" shape-rendering="crispEdges"/>
<text x="305.8388329946516" y="486.01575478058743" fill="#ff00ff" font-size="13.33" font-family='"Liberation Mono", monospace' text-anchor="middle"  xml:space="preserve">4</text>
<path d="M356.3 497.5 L353.3 507.5 L352.3 507.5 L352.3 509.3 L360.3 509.3 L360.3 507.5 L359.3 507.5 Z" fill="none" stroke="#ff00ff" stroke-width="1" stroke-linejoin="miter" shape-rendering="crispEdges"/>
<text x="356.3188756928447" y="520.340898112575" fill="#ff00ff" font-size="13.33" font-family='"Liberation Mono", monospace' text-anchor="middle"  xml:space="preserve">5</text>
<path d="M333.8 592.0 L330.8 602.0 L329.8 602.0 L329.8 603.8 L337.8 603.8 L337.8 602.0 L336.8 602.0 Z" fill="none" stroke="#ff00ff" stroke-width="1" stroke-linejoin="miter" shape-rendering="crispEdges"/>
<text x="333.8058715413899" y="614.7891146491155" fill="#ff00ff" font-size="13.33" font-family='"Liberation Mono", monospace' text-anchor="middle"  xml:space="preserve">6</text>
<path d="M248.8 564.8 L245.8 574.8 L244.8 574.8 L244.8 576.6 L252.8 576.6 L252.8 574.8 L251.8 574.8 Z" fill="none" stroke="#ff00ff" stroke-width="1" stroke-linejoin="miter" shape-rendering="crispEdges"/>
<text x="248.8452880344495" y="587.6013973181592" fill="#ff00ff" font-size="13.33" font-family='"Liberation Mono", monospace' text-anchor="middle"  xml:space="preserve">7</text>
<path d="M361.2 512.0 L358.2 502.0 L357.2 502.0 L357.2 500.2 L365.2 500.2 L365.2 502.0 L364.2 502.0 Z" fill="none" stroke="#ff00ff" stroke-width="1.2" shape-rendering="crispEdges"/>
<text x="361.2" y="496.0" fill="#ff00ff" font-size="13.33" font-family='"Liberation Mono", monospace' text-anchor="middle"  xml:space="preserve">8</text>
<path d="M16.5 673.0 L9.5 680.5 L23.5 680.5 Z" fill="none" stroke="#ff00ff" stroke-width="1" shape-rendering="crispEdges"/>
<path d="M24.5 673.0 L17.5 680.5 L31.5 680.5 Z" fill="none" stroke="#ff00ff" stroke-width="1" shape-rendering="crispEdges"/>
<path d="M34.5 673.0 L27.5 680.5 L41.5 680.5 Z" fill="none" stroke="#ff00ff" stroke-width="1" shape-rendering="crispEdges"/>
<path d="M66.5 673.0 L59.5 680.5 L73.5 680.5 Z" fill="none" stroke="#ff00ff" stroke-width="1" shape-rendering="crispEdges"/>
<path d="M118.5 673.0 L111.5 680.5 L125.5 680.5 Z" fill="none" stroke="#ff00ff" stroke-width="1" shape-rendering="crispEdges"/>
<path d="M222.5 673.0 L215.5 680.5 L229.5 680.5 Z" fill="none" stroke="#ff00ff" stroke-width="1" shape-rendering="crispEdges"/>
<path d="M431.5 673.0 L424.5 680.5 L438.5 680.5 Z" fill="none" stroke="#ff00ff" stroke-width="1" shape-rendering="crispEdges"/>
<path d="M137.5 673.0 L130.5 680.5 L144.5 680.5 Z" fill="#ff00ff" stroke="#ff00ff" stroke-width="1" shape-rendering="crispEdges"/>
<line x1="552.5" y1="390.5" x2="552.5" y2="672.5" stroke="#343434" stroke-width="1"/>
<line x1="587.5" y1="390.5" x2="587.5" y2="672.5" stroke="#343434" stroke-width="1"/>
<line x1="622.5" y1="390.5" x2="622.5" y2="672.5" stroke="#343434" stroke-width="1"/>
<line x1="657.5" y1="390.5" x2="657.5" y2="672.5" stroke="#343434" stroke-width="1"/>
<line x1="693.5" y1="390.5" x2="693.5" y2="672.5" stroke="#343434" stroke-width="1"/>
<line x1="728.5" y1="390.5" x2="728.5" y2="672.5" stroke="#343434" stroke-width="1"/>
<line x1="763.5" y1="390.5" x2="763.5" y2="672.5" stroke="#343434" stroke-width="1"/>
<line x1="798.5" y1="390.5" x2="798.5" y2="672.5" stroke="#343434" stroke-width="1"/>
<line x1="833.5" y1="390.5" x2="833.5" y2="672.5" stroke="#343434" stroke-width="1"/>
<line x1="517.5" y1="418.5" x2="869.5" y2="418.5" stroke="#343434" stroke-width="1"/>
<line x1="517.5" y1="446.5" x2="869.5" y2="446.5" stroke="#343434" stroke-width="1"/>
<line x1="517.5" y1="474.5" x2="869.5" y2="474.5" stroke="#343434" stroke-width="1"/>
<line x1="517.5" y1="502.5" x2="869.5" y2="502.5" stroke="#343434" stroke-width="1"/>
<line x1="517.5" y1="531.5" x2="869.5" y2="531.5" stroke="#343434" stroke-width="1"/>
<line x1="517.5" y1="559.5" x2="869.5" y2="559.5" stroke="#343434" stroke-width="1"/>
<line x1="517.5" y1="587.5" x2="869.5" y2="587.5" stroke="#343434" stroke-width="1"/>
<line x1="517.5" y1="615.5" x2="869.5" y2="615.5" stroke="#343434" stroke-width="1"/>
<line x1="517.5" y1="643.5" x2="869.5" y2="643.5" stroke="#343434" stroke-width="1"/>
<rect x="517.5" y="390.5" width="352" height="282" fill="none" stroke="#a0a0a0" stroke-width="1"/>
<text x="453" y="376" fill="#00ff00" font-size="13.33" font-family='"Liberation Mono", monospace' text-anchor="start"  xml:space="preserve">Tr4 Ls Lin Mag 100.0mU/ Ref 0.000U [F2 Equ]</text>
<text x="506" y="394.0" fill="#b8b8b8" font-size="13.33" font-family='"Liberation Mono", monospace' text-anchor="end"  xml:space="preserve">1.000</text>
<text x="506" y="422.0" fill="#b8b8b8" font-size="13.33" font-family='"Liberation Mono", monospace' text-anchor="end"  xml:space="preserve">900.0m</text>
<text x="506" y="450.0" fill="#b8b8b8" font-size="13.33" font-family='"Liberation Mono", monospace' text-anchor="end"  xml:space="preserve">800.0m</text>
<text x="506" y="478.0" fill="#b8b8b8" font-size="13.33" font-family='"Liberation Mono", monospace' text-anchor="end"  xml:space="preserve">700.0m</text>
<text x="506" y="506.0" fill="#b8b8b8" font-size="13.33" font-family='"Liberation Mono", monospace' text-anchor="end"  xml:space="preserve">600.0m</text>
<text x="506" y="535.0" fill="#b8b8b8" font-size="13.33" font-family='"Liberation Mono", monospace' text-anchor="end"  xml:space="preserve">500.0m</text>
<text x="506" y="563.0" fill="#b8b8b8" font-size="13.33" font-family='"Liberation Mono", monospace' text-anchor="end"  xml:space="preserve">400.0m</text>
<text x="506" y="591.0" fill="#b8b8b8" font-size="13.33" font-family='"Liberation Mono", monospace' text-anchor="end"  xml:space="preserve">300.0m</text>
<text x="506" y="619.0" fill="#b8b8b8" font-size="13.33" font-family='"Liberation Mono", monospace' text-anchor="end"  xml:space="preserve">200.0m</text>
<text x="506" y="647.0" fill="#b8b8b8" font-size="13.33" font-family='"Liberation Mono", monospace' text-anchor="end"  xml:space="preserve">100.0m</text>
<text x="506" y="676.0" fill="#00ff00" font-size="13.33" font-family='"Liberation Mono", monospace' text-anchor="end"  xml:space="preserve">0.000</text>
<text x="520" y="402" fill="#00ff00" font-size="13.33" font-family='"Liberation Mono", monospace' text-anchor="start"  xml:space="preserve"> 1  100.00000 MHz  6.9720 nU</text>
<text x="520" y="415" fill="#00ff00" font-size="13.33" font-family='"Liberation Mono", monospace' text-anchor="start"  xml:space="preserve"> 2  500.00000 MHz  6.4930 nU</text>
<text x="520" y="428" fill="#00ff00" font-size="13.33" font-family='"Liberation Mono", monospace' text-anchor="start"  xml:space="preserve"> 3  1.0000000 GHz  6.5852 nU</text>
<text x="520" y="441" fill="#00ff00" font-size="13.33" font-family='"Liberation Mono", monospace' text-anchor="start"  xml:space="preserve"> 4  2.5000000 GHz  7.8490 nU</text>
<text x="520" y="454" fill="#00ff00" font-size="13.33" font-family='"Liberation Mono", monospace' text-anchor="start"  xml:space="preserve"> 5  5.0000000 GHz  21.471 nU</text>
<text x="520" y="467" fill="#00ff00" font-size="13.33" font-family='"Liberation Mono", monospace' text-anchor="start"  xml:space="preserve"> 6  10.000000 GHz  3.1530 nU</text>
<text x="520" y="480" fill="#00ff00" font-size="13.33" font-family='"Liberation Mono", monospace' text-anchor="start"  xml:space="preserve"> 7  20.000000 GHz  319.61 pU</text>
<text x="520" y="493" fill="#00ff00" font-size="13.33" font-family='"Liberation Mono", monospace' text-anchor="start"  xml:space="preserve">&gt;8  5.9450751 GHz  50.269 nU</text>
<line x1="517.5" y1="672.5" x2="869.5" y2="672.5" stroke="#00ff00" stroke-width="1.2"/>
<path d="M517.5 672.0 L514.5 682.0 L513.5 682.0 L513.5 683.8 L521.5 683.8 L521.5 682.0 L520.5 682.0 Z" fill="none" stroke="#00ff00" stroke-width="1" stroke-linejoin="miter" shape-rendering="crispEdges"/>
<text x="517.5" y="694.8" fill="#00ff00" font-size="13.33" font-family='"Liberation Mono", monospace' text-anchor="middle"  xml:space="preserve">1</text>
<path d="M524.5 672.0 L521.5 682.0 L520.5 682.0 L520.5 683.8 L528.5 683.8 L528.5 682.0 L527.5 682.0 Z" fill="none" stroke="#00ff00" stroke-width="1" stroke-linejoin="miter" shape-rendering="crispEdges"/>
<text x="524.5" y="694.8" fill="#00ff00" font-size="13.33" font-family='"Liberation Mono", monospace' text-anchor="middle"  xml:space="preserve">2</text>
<path d="M533.5 672.0 L530.5 682.0 L529.5 682.0 L529.5 683.8 L537.5 683.8 L537.5 682.0 L536.5 682.0 Z" fill="none" stroke="#00ff00" stroke-width="1" stroke-linejoin="miter" shape-rendering="crispEdges"/>
<text x="533.5" y="694.8" fill="#00ff00" font-size="13.33" font-family='"Liberation Mono", monospace' text-anchor="middle"  xml:space="preserve">3</text>
<path d="M560.5 672.0 L557.5 682.0 L556.5 682.0 L556.5 683.8 L564.5 683.8 L564.5 682.0 L563.5 682.0 Z" fill="none" stroke="#00ff00" stroke-width="1" stroke-linejoin="miter" shape-rendering="crispEdges"/>
<text x="560.5" y="694.8" fill="#00ff00" font-size="13.33" font-family='"Liberation Mono", monospace' text-anchor="middle"  xml:space="preserve">4</text>
<path d="M604.5 672.0 L601.5 682.0 L600.5 682.0 L600.5 683.8 L608.5 683.8 L608.5 682.0 L607.5 682.0 Z" fill="none" stroke="#00ff00" stroke-width="1" stroke-linejoin="miter" shape-rendering="crispEdges"/>
<text x="604.5" y="694.8" fill="#00ff00" font-size="13.33" font-family='"Liberation Mono", monospace' text-anchor="middle"  xml:space="preserve">5</text>
<path d="M692.5 672.0 L689.5 682.0 L688.5 682.0 L688.5 683.8 L696.5 683.8 L696.5 682.0 L695.5 682.0 Z" fill="none" stroke="#00ff00" stroke-width="1" stroke-linejoin="miter" shape-rendering="crispEdges"/>
<text x="692.5" y="694.8" fill="#00ff00" font-size="13.33" font-family='"Liberation Mono", monospace' text-anchor="middle"  xml:space="preserve">6</text>
<path d="M869.5 672.0 L866.5 682.0 L865.5 682.0 L865.5 683.8 L873.5 683.8 L873.5 682.0 L872.5 682.0 Z" fill="none" stroke="#00ff00" stroke-width="1" stroke-linejoin="miter" shape-rendering="crispEdges"/>
<text x="869.5" y="694.8" fill="#00ff00" font-size="13.33" font-family='"Liberation Mono", monospace' text-anchor="middle"  xml:space="preserve">7</text>
<path d="M621.5 672.0 L618.5 662.0 L617.5 662.0 L617.5 660.2 L625.5 660.2 L625.5 662.0 L624.5 662.0 Z" fill="none" stroke="#00ff00" stroke-width="1.2" shape-rendering="crispEdges"/>
<text x="621.5" y="656" fill="#00ff00" font-size="13.33" font-family='"Liberation Mono", monospace' text-anchor="middle"  xml:space="preserve">8</text>
<path d="M517.5 672.0 L510.5 679.5 L524.5 679.5 Z" fill="none" stroke="#00ff00" stroke-width="1" shape-rendering="crispEdges"/>
<path d="M524.5 672.0 L517.5 679.5 L531.5 679.5 Z" fill="none" stroke="#00ff00" stroke-width="1" shape-rendering="crispEdges"/>
<path d="M533.5 672.0 L526.5 679.5 L540.5 679.5 Z" fill="none" stroke="#00ff00" stroke-width="1" shape-rendering="crispEdges"/>
<path d="M560.5 672.0 L553.5 679.5 L567.5 679.5 Z" fill="none" stroke="#00ff00" stroke-width="1" shape-rendering="crispEdges"/>
<path d="M604.5 672.0 L597.5 679.5 L611.5 679.5 Z" fill="none" stroke="#00ff00" stroke-width="1" shape-rendering="crispEdges"/>
<path d="M692.5 672.0 L685.5 679.5 L699.5 679.5 Z" fill="none" stroke="#00ff00" stroke-width="1" shape-rendering="crispEdges"/>
<path d="M869.5 672.0 L862.5 679.5 L876.5 679.5 Z" fill="none" stroke="#00ff00" stroke-width="1" shape-rendering="crispEdges"/>
<path d="M621.5 672.0 L614.5 679.5 L628.5 679.5 Z" fill="#00ff00" stroke="#00ff00" stroke-width="1" shape-rendering="crispEdges"/>
<path d="M517 672.5 L509 665.0 L509 680.0 Z" fill="#00ff00"/>
<path d="M870 672.5 L878 665.0 L878 680.0 Z" fill="#00ff00"/>
</g>
<rect x="885" y="43" width="139" height="662" fill="#000000" />
<rect x="886" y="43" width="137" height="34" fill="#343462" />
<rect x="886" y="43" width="137" height="1" fill="#9090c4" />
<rect x="886" y="44" width="137" height="1" fill="#5c5c92" />
<rect x="886" y="43" width="1" height="34" fill="#8888c0" />
<rect x="887" y="44" width="1" height="33" fill="#5c5c92" />
<rect x="1021" y="44" width="2" height="33" fill="#000038" />
<rect x="887" y="75" width="136" height="2" fill="#000030" />
<text x="955" y="65" fill="#ffffff" font-size="13" font-family='"Liberation Sans", sans-serif' text-anchor="middle" textLength="84.5" lengthAdjust="spacingAndGlyphs" xml:space="preserve">Marker Search</text>
<rect x="886" y="78" width="137" height="44" fill="#b4b4b4" />
<rect x="886" y="78" width="137" height="1" fill="#f0f0f0" />
<rect x="886" y="78" width="1" height="44" fill="#f0f0f0" />
<rect x="887" y="79" width="135" height="1" fill="#c4c4c4" />
<rect x="887" y="79" width="1" height="42" fill="#c4c4c4" />
<rect x="1021" y="79" width="1" height="43" fill="#949494" />
<rect x="887" y="120" width="135" height="1" fill="#949494" />
<rect x="1022" y="78" width="1" height="44" fill="#5a5a5a" />
<rect x="886" y="121" width="136" height="1" fill="#8c8c8c" />
<text x="955" y="105.2" fill="#000000" font-size="12" font-family='"Liberation Sans", sans-serif' text-anchor="middle" textLength="23.6" lengthAdjust="spacingAndGlyphs" xml:space="preserve">Max</text>
<rect x="886" y="123" width="137" height="44" fill="#4a4a4a" />
<rect x="886" y="123" width="137" height="1" fill="#6c6c6c" />
<rect x="886" y="123" width="1" height="44" fill="#6c6c6c" />
<rect x="887" y="124" width="135" height="1" fill="#555555" />
<rect x="887" y="124" width="1" height="42" fill="#555555" />
<rect x="1021" y="124" width="1" height="43" fill="#383838" />
<rect x="887" y="165" width="135" height="1" fill="#383838" />
<rect x="1022" y="123" width="1" height="44" fill="#222222" />
<rect x="886" y="166" width="136" height="1" fill="#303030" />
<text x="955" y="150.2" fill="#ffffff" font-size="12" font-family='"Liberation Sans", sans-serif' text-anchor="middle" textLength="20" lengthAdjust="spacingAndGlyphs" xml:space="preserve">Min</text>
<circle cx="894.3" cy="145.6" r="3.6" fill="#cfcfcf" stroke="#2a2a2a" stroke-width="0.7"/>
<rect x="886" y="168" width="137" height="44" fill="#b4b4b4" />
<rect x="886" y="168" width="137" height="1" fill="#f0f0f0" />
<rect x="886" y="168" width="1" height="44" fill="#f0f0f0" />
<rect x="887" y="169" width="135" height="1" fill="#c4c4c4" />
<rect x="887" y="169" width="1" height="42" fill="#c4c4c4" />
<rect x="1021" y="169" width="1" height="43" fill="#949494" />
<rect x="887" y="210" width="135" height="1" fill="#949494" />
<rect x="1022" y="168" width="1" height="44" fill="#5a5a5a" />
<rect x="886" y="211" width="136" height="1" fill="#8c8c8c" />
<text x="955" y="195.2" fill="#000000" font-size="12" font-family='"Liberation Sans", sans-serif' text-anchor="middle" textLength="30" lengthAdjust="spacingAndGlyphs" xml:space="preserve">Peak</text>
<path d="M1014 185.0 L1019 190.0 L1014 195.0 Z" fill="#c8c8c8" stroke="#ececec" stroke-width="0.9"/>
<line x1="1013.5" y1="185.0" x2="1013.5" y2="195.0" stroke="#6e6e6e" stroke-width="1"/>
<rect x="886" y="213" width="137" height="44" fill="#b4b4b4" />
<rect x="886" y="213" width="137" height="1" fill="#f0f0f0" />
<rect x="886" y="213" width="1" height="44" fill="#f0f0f0" />
<rect x="887" y="214" width="135" height="1" fill="#c4c4c4" />
<rect x="887" y="214" width="1" height="42" fill="#c4c4c4" />
<rect x="1021" y="214" width="1" height="43" fill="#949494" />
<rect x="887" y="255" width="135" height="1" fill="#949494" />
<rect x="1022" y="213" width="1" height="44" fill="#5a5a5a" />
<rect x="886" y="256" width="136" height="1" fill="#8c8c8c" />
<text x="955" y="240.2" fill="#000000" font-size="12" font-family='"Liberation Sans", sans-serif' text-anchor="middle" textLength="39.2" lengthAdjust="spacingAndGlyphs" xml:space="preserve">Target</text>
<path d="M1014 230.0 L1019 235.0 L1014 240.0 Z" fill="#c8c8c8" stroke="#ececec" stroke-width="0.9"/>
<line x1="1013.5" y1="230.0" x2="1013.5" y2="240.0" stroke="#6e6e6e" stroke-width="1"/>
<rect x="886" y="258" width="137" height="44" fill="#b4b4b4" />
<rect x="886" y="258" width="137" height="1" fill="#f0f0f0" />
<rect x="886" y="258" width="1" height="44" fill="#f0f0f0" />
<rect x="887" y="259" width="135" height="1" fill="#c4c4c4" />
<rect x="887" y="259" width="1" height="42" fill="#c4c4c4" />
<rect x="1021" y="259" width="1" height="43" fill="#949494" />
<rect x="887" y="300" width="135" height="1" fill="#949494" />
<rect x="1022" y="258" width="1" height="44" fill="#5a5a5a" />
<rect x="886" y="301" width="136" height="1" fill="#8c8c8c" />
<text x="955" y="285.2" fill="#000000" font-size="12" font-family='"Liberation Sans", sans-serif' text-anchor="middle" textLength="58.6" lengthAdjust="spacingAndGlyphs" xml:space="preserve">Multi Peak</text>
<path d="M1014 275.0 L1019 280.0 L1014 285.0 Z" fill="#c8c8c8" stroke="#ececec" stroke-width="0.9"/>
<line x1="1013.5" y1="275.0" x2="1013.5" y2="285.0" stroke="#6e6e6e" stroke-width="1"/>
<rect x="886" y="303" width="137" height="42" fill="#b4b4b4" />
<rect x="886" y="303" width="137" height="1" fill="#f0f0f0" />
<rect x="886" y="303" width="1" height="42" fill="#f0f0f0" />
<rect x="887" y="304" width="135" height="1" fill="#c4c4c4" />
<rect x="887" y="304" width="1" height="40" fill="#c4c4c4" />
<rect x="1021" y="304" width="1" height="41" fill="#949494" />
<rect x="887" y="343" width="135" height="1" fill="#949494" />
<rect x="1022" y="303" width="1" height="42" fill="#5a5a5a" />
<rect x="886" y="344" width="136" height="1" fill="#8c8c8c" />
<text x="955" y="329.2" fill="#000000" font-size="12" font-family='"Liberation Sans", sans-serif' text-anchor="middle" textLength="69.4" lengthAdjust="spacingAndGlyphs" xml:space="preserve">Multi Target</text>
<path d="M1014 319.0 L1019 324.0 L1014 329.0 Z" fill="#c8c8c8" stroke="#ececec" stroke-width="0.9"/>
<line x1="1013.5" y1="319.0" x2="1013.5" y2="329.0" stroke="#6e6e6e" stroke-width="1"/>
<rect x="886" y="346" width="137" height="1" fill="#9494c8" />
<rect x="886" y="347" width="137" height="1" fill="#1c1c4c" />
<rect x="886" y="348" width="137" height="1" fill="#000030" />
<rect x="886" y="350" width="137" height="40" fill="#b4b4b4" />
<rect x="886" y="350" width="137" height="1" fill="#f0f0f0" />
<rect x="886" y="350" width="1" height="40" fill="#f0f0f0" />
<rect x="887" y="351" width="135" height="1" fill="#c4c4c4" />
<rect x="887" y="351" width="1" height="38" fill="#c4c4c4" />
<rect x="1021" y="351" width="1" height="39" fill="#949494" />
<rect x="887" y="388" width="135" height="1" fill="#949494" />
<rect x="1022" y="350" width="1" height="40" fill="#5a5a5a" />
<rect x="886" y="389" width="136" height="1" fill="#8c8c8c" />
<text x="955" y="365.7" fill="#000000" font-size="12" font-family='"Liberation Sans", sans-serif' text-anchor="middle" textLength="49.8" lengthAdjust="spacingAndGlyphs" xml:space="preserve">Tracking</text>
<rect x="900" y="370" width="110" height="18" fill="#f2f2f2" />
<rect x="900" y="370" width="109" height="17" fill="#7a7a7a" />
<rect x="901" y="371" width="108" height="16" fill="#d2d2d2" />
<text x="955" y="383.9" fill="#000000" font-size="12" font-family='"Liberation Sans", sans-serif' text-anchor="middle" textLength="24" lengthAdjust="spacingAndGlyphs" xml:space="preserve">OFF</text>
<rect x="886" y="391" width="137" height="1" fill="#9494c8" />
<rect x="886" y="392" width="137" height="1" fill="#1c1c4c" />
<rect x="886" y="393" width="137" height="1" fill="#000030" />
<rect x="886" y="395" width="137" height="40" fill="#b4b4b4" />
<rect x="886" y="395" width="137" height="1" fill="#f0f0f0" />
<rect x="886" y="395" width="1" height="40" fill="#f0f0f0" />
<rect x="887" y="396" width="135" height="1" fill="#c4c4c4" />
<rect x="887" y="396" width="1" height="38" fill="#c4c4c4" />
<rect x="1021" y="396" width="1" height="39" fill="#949494" />
<rect x="887" y="433" width="135" height="1" fill="#949494" />
<rect x="1022" y="395" width="1" height="40" fill="#5a5a5a" />
<rect x="886" y="434" width="136" height="1" fill="#8c8c8c" />
<text x="955" y="410.7" fill="#000000" font-size="12" font-family='"Liberation Sans", sans-serif' text-anchor="middle" textLength="80" lengthAdjust="spacingAndGlyphs" xml:space="preserve">Search Range</text>
<rect x="900" y="415" width="110" height="18" fill="#f2f2f2" />
<rect x="900" y="415" width="109" height="17" fill="#7a7a7a" />
<rect x="901" y="416" width="108" height="16" fill="#d2d2d2" />
<text x="955" y="428.9" fill="#000000" font-size="12" font-family='"Liberation Sans", sans-serif' text-anchor="middle" textLength="24" lengthAdjust="spacingAndGlyphs" xml:space="preserve">OFF</text>
<path d="M1014 410.5 L1019 415.5 L1014 420.5 Z" fill="#c8c8c8" stroke="#ececec" stroke-width="0.9"/>
<line x1="1013.5" y1="410.5" x2="1013.5" y2="420.5" stroke="#6e6e6e" stroke-width="1"/>
<rect x="886" y="436" width="137" height="1" fill="#9494c8" />
<rect x="886" y="437" width="137" height="1" fill="#1c1c4c" />
<rect x="886" y="438" width="137" height="1" fill="#000030" />
<rect x="886" y="440" width="137" height="42" fill="#b4b4b4" />
<rect x="886" y="440" width="137" height="1" fill="#f0f0f0" />
<rect x="886" y="440" width="1" height="42" fill="#f0f0f0" />
<rect x="887" y="441" width="135" height="1" fill="#c4c4c4" />
<rect x="887" y="441" width="1" height="40" fill="#c4c4c4" />
<rect x="1021" y="441" width="1" height="41" fill="#949494" />
<rect x="887" y="480" width="135" height="1" fill="#949494" />
<rect x="1022" y="440" width="1" height="42" fill="#5a5a5a" />
<rect x="886" y="481" width="136" height="1" fill="#8c8c8c" />
<text x="955" y="456.7" fill="#000000" font-size="12" font-family='"Liberation Sans", sans-serif' text-anchor="middle" textLength="59.3" lengthAdjust="spacingAndGlyphs" xml:space="preserve">Bandwidth</text>
<rect x="900" y="461" width="110" height="18" fill="#f2f2f2" />
<rect x="900" y="461" width="109" height="17" fill="#7a7a7a" />
<rect x="901" y="462" width="108" height="16" fill="#d2d2d2" />
<text x="955" y="474.9" fill="#000000" font-size="12" font-family='"Liberation Sans", sans-serif' text-anchor="middle" textLength="24" lengthAdjust="spacingAndGlyphs" xml:space="preserve">OFF</text>
<rect x="886" y="483" width="137" height="44" fill="#b4b4b4" />
<rect x="886" y="483" width="137" height="1" fill="#f0f0f0" />
<rect x="886" y="483" width="1" height="44" fill="#f0f0f0" />
<rect x="887" y="484" width="135" height="1" fill="#c4c4c4" />
<rect x="887" y="484" width="1" height="42" fill="#c4c4c4" />
<rect x="1021" y="484" width="1" height="43" fill="#949494" />
<rect x="887" y="525" width="135" height="1" fill="#949494" />
<rect x="1022" y="483" width="1" height="44" fill="#5a5a5a" />
<rect x="886" y="526" width="136" height="1" fill="#8c8c8c" />
<text x="955" y="500.7" fill="#000000" font-size="12" font-family='"Liberation Sans", sans-serif' text-anchor="middle" textLength="95.2" lengthAdjust="spacingAndGlyphs" xml:space="preserve">Bandwidth Value</text>
<rect x="900" y="505" width="110" height="18" fill="#f2f2f2" />
<rect x="900" y="505" width="109" height="17" fill="#7a7a7a" />
<rect x="901" y="506" width="108" height="16" fill="#d2d2d2" />
<text x="955" y="518.9" fill="#000000" font-size="12" font-family='"Liberation Sans", sans-serif' text-anchor="middle" textLength="62.2" lengthAdjust="spacingAndGlyphs" xml:space="preserve">-3.0000 dB</text>
<rect x="886" y="528" width="137" height="44" fill="#b4b4b4" />
<rect x="886" y="528" width="137" height="1" fill="#f0f0f0" />
<rect x="886" y="528" width="1" height="44" fill="#f0f0f0" />
<rect x="887" y="529" width="135" height="1" fill="#c4c4c4" />
<rect x="887" y="529" width="1" height="42" fill="#c4c4c4" />
<rect x="1021" y="529" width="1" height="43" fill="#949494" />
<rect x="887" y="570" width="135" height="1" fill="#949494" />
<rect x="1022" y="528" width="1" height="44" fill="#5a5a5a" />
<rect x="886" y="571" width="136" height="1" fill="#8c8c8c" />
<text x="955" y="545.7" fill="#000000" font-size="12" font-family='"Liberation Sans", sans-serif' text-anchor="middle" textLength="31.8" lengthAdjust="spacingAndGlyphs" xml:space="preserve">Notch</text>
<rect x="900" y="550" width="110" height="18" fill="#f2f2f2" />
<rect x="900" y="550" width="109" height="17" fill="#7a7a7a" />
<rect x="901" y="551" width="108" height="16" fill="#d2d2d2" />
<text x="955" y="563.9" fill="#000000" font-size="12" font-family='"Liberation Sans", sans-serif' text-anchor="middle" textLength="24" lengthAdjust="spacingAndGlyphs" xml:space="preserve">OFF</text>
<rect x="886" y="573" width="137" height="42" fill="#b4b4b4" />
<rect x="886" y="573" width="137" height="1" fill="#f0f0f0" />
<rect x="886" y="573" width="1" height="42" fill="#f0f0f0" />
<rect x="887" y="574" width="135" height="1" fill="#c4c4c4" />
<rect x="887" y="574" width="1" height="40" fill="#c4c4c4" />
<rect x="1021" y="574" width="1" height="41" fill="#949494" />
<rect x="887" y="613" width="135" height="1" fill="#949494" />
<rect x="1022" y="573" width="1" height="42" fill="#5a5a5a" />
<rect x="886" y="614" width="136" height="1" fill="#8c8c8c" />
<text x="955" y="590.7" fill="#000000" font-size="12" font-family='"Liberation Sans", sans-serif' text-anchor="middle" textLength="68" lengthAdjust="spacingAndGlyphs" xml:space="preserve">Notch Value</text>
<rect x="900" y="595" width="110" height="18" fill="#f2f2f2" />
<rect x="900" y="595" width="109" height="17" fill="#7a7a7a" />
<rect x="901" y="596" width="108" height="16" fill="#d2d2d2" />
<text x="955" y="608.9" fill="#000000" font-size="12" font-family='"Liberation Sans", sans-serif' text-anchor="middle" textLength="62.2" lengthAdjust="spacingAndGlyphs" xml:space="preserve">-3.0000 dB</text>
<rect x="886" y="616" width="137" height="1" fill="#9494c8" />
<rect x="886" y="617" width="137" height="1" fill="#1c1c4c" />
<rect x="886" y="618" width="137" height="1" fill="#000030" />
<rect x="886" y="620" width="137" height="42" fill="#b4b4b4" />
<rect x="886" y="620" width="137" height="1" fill="#f0f0f0" />
<rect x="886" y="620" width="1" height="42" fill="#f0f0f0" />
<rect x="887" y="621" width="135" height="1" fill="#c4c4c4" />
<rect x="887" y="621" width="1" height="40" fill="#c4c4c4" />
<rect x="1021" y="621" width="1" height="41" fill="#949494" />
<rect x="887" y="660" width="135" height="1" fill="#949494" />
<rect x="1022" y="620" width="1" height="42" fill="#5a5a5a" />
<rect x="886" y="661" width="136" height="1" fill="#8c8c8c" />
<text x="955" y="645" fill="#000000" font-size="12" font-family='"Liberation Sans", sans-serif' text-anchor="middle" textLength="40" lengthAdjust="spacingAndGlyphs" xml:space="preserve">Return</text>
<rect x="886" y="663" width="137" height="40" fill="#4a4a4a" />
<rect x="886" y="663" width="137" height="1" fill="#5c5c5c" />
<rect x="886" y="663" width="1" height="40" fill="#5c5c5c" />
<rect x="887" y="664" width="135" height="1" fill="#4e4e4e" />
<rect x="887" y="664" width="1" height="38" fill="#4e4e4e" />
<rect x="1021" y="664" width="1" height="39" fill="#404040" />
<rect x="887" y="701" width="135" height="1" fill="#404040" />
<rect x="1022" y="663" width="1" height="40" fill="#2a2a2a" />
<rect x="886" y="702" width="136" height="1" fill="#383838" />
<rect x="0" y="684" width="885" height="19" fill="#b4b4b4" />
<rect x="0" y="684" width="885" height="1" fill="#ececec" />
<rect x="0" y="702" width="885" height="2" fill="#bebebe" />
<rect x="0" y="704" width="1024" height="1" fill="#080808" />
<rect x="2" y="686" width="15" height="16" fill="#d4d4d4" />
<rect x="2" y="686" width="15" height="1" fill="#9a9a9a" />
<rect x="2" y="686" width="1" height="16" fill="#9a9a9a" />
<rect x="2" y="701" width="15" height="1" fill="#f0f0f0" />
<rect x="16" y="686" width="1" height="16" fill="#f0f0f0" />
<text x="10" y="699" fill="#000" font-size="12" font-family='"Liberation Sans", sans-serif' text-anchor="middle" textLength="7" lengthAdjust="spacingAndGlyphs" xml:space="preserve">1</text>
<text x="21" y="699" fill="#000" font-size="12" font-family='"Liberation Sans", sans-serif' text-anchor="start" textLength="71.8" lengthAdjust="spacingAndGlyphs" xml:space="preserve">Start 50 MHz</text>
<text x="372" y="699" fill="#000" font-size="12" font-family='"Liberation Sans", sans-serif' text-anchor="start" textLength="70.8" lengthAdjust="spacingAndGlyphs" xml:space="preserve">IFBW 70 kHz</text>
<text x="722" y="699" fill="#000" font-size="12" font-family='"Liberation Sans", sans-serif' text-anchor="start" textLength="69.7" lengthAdjust="spacingAndGlyphs" xml:space="preserve">Stop 20 GHz</text>
<rect x="797" y="687" width="45" height="15" fill="#3e3e8a" />
<text x="819.5" y="699" fill="#ffffff" font-size="12.5" font-family='"Liberation Sans", sans-serif' text-anchor="middle" textLength="31" lengthAdjust="spacingAndGlyphs" xml:space="preserve">16/16</text>
<rect x="844" y="687" width="25" height="15" fill="#3e3e8a" />
<text x="856.5" y="699" fill="#ffffff" font-size="12.5" font-family='"Liberation Sans", sans-serif' text-anchor="middle" textLength="20" lengthAdjust="spacingAndGlyphs" xml:space="preserve">Cor</text>
<rect x="871" y="687" width="11" height="15" fill="#d4d4d4" />
<rect x="0" y="705" width="1024" height="23" fill="#4c4c4c" />
<rect x="0" y="705" width="1024" height="1" fill="#6e6e6e" />
<rect x="0" y="725" width="1024" height="1" fill="#343434" />
<rect x="0" y="726" width="1024" height="2" fill="#202020" />
<rect x="704" y="707" width="48" height="18" fill="#8a8a8a" />
<rect x="704" y="707" width="47" height="17" fill="#262626" />
<rect x="705" y="708" width="46" height="16" fill="#3e3e8a" />
<text x="728.0" y="722" fill="#ffffff" font-size="16" font-family='"Liberation Sans", sans-serif' text-anchor="middle" textLength="33.8" lengthAdjust="spacingAndGlyphs" xml:space="preserve">Hold</text>
<rect x="753" y="707" width="39" height="18" fill="#8a8a8a" />
<rect x="753" y="707" width="38" height="17" fill="#262626" />
<rect x="754" y="708" width="37" height="16" fill="#3c3c3c" />
<text x="772.5" y="722" fill="#858585" font-size="16" font-family='"Liberation Sans", sans-serif' text-anchor="middle" textLength="31.8" lengthAdjust="spacingAndGlyphs" xml:space="preserve">Stop</text>
<rect x="794" y="707" width="53" height="18" fill="#8a8a8a" />
<rect x="794" y="707" width="52" height="17" fill="#262626" />
<rect x="795" y="708" width="51" height="16" fill="#3c3c3c" />
<text x="820.5" y="722" fill="#858585" font-size="16" font-family='"Liberation Sans", sans-serif' text-anchor="middle" textLength="46.2" lengthAdjust="spacingAndGlyphs" xml:space="preserve">ExtRef</text>
<rect x="848" y="707" width="32" height="18" fill="#8a8a8a" />
<rect x="848" y="707" width="31" height="17" fill="#262626" />
<rect x="849" y="708" width="30" height="16" fill="#3c3c3c" />
<text x="864.0" y="722" fill="#858585" font-size="16" font-family='"Liberation Sans", sans-serif' text-anchor="middle" textLength="24.8" lengthAdjust="spacingAndGlyphs" xml:space="preserve">Svc</text>
<rect x="881" y="707" width="139" height="18" fill="#8a8a8a" />
<rect x="881" y="707" width="138" height="17" fill="#262626" />
<rect x="882" y="708" width="137" height="16" fill="#3c3c3c" />
<text x="950.5" y="722" fill="#ffffff" font-size="16" font-family='"Liberation Sans", sans-serif' text-anchor="middle" textLength="131.3" lengthAdjust="spacingAndGlyphs" xml:space="preserve">2022-01-13 16:16</text>
</svg></body></html>
